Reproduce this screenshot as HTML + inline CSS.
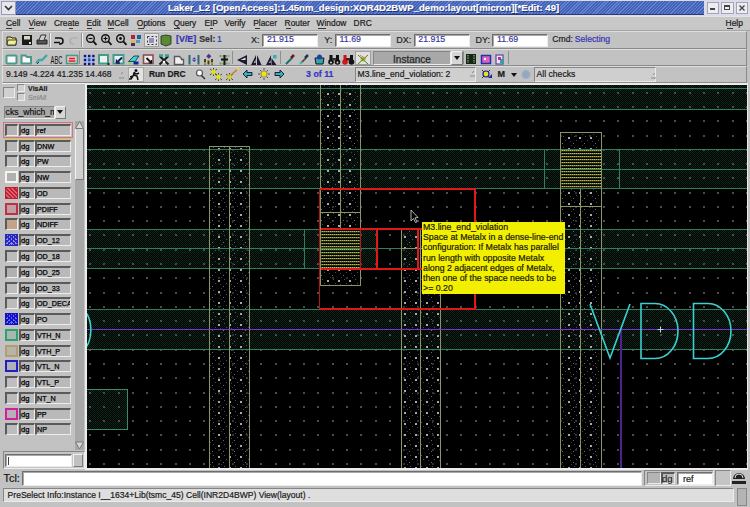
<!DOCTYPE html>
<html><head><meta charset="utf-8">
<style>
*{margin:0;padding:0;box-sizing:border-box}
html,body{width:750px;height:507px;overflow:hidden;background:#c2c2c2;font-family:"Liberation Sans",sans-serif;color:#1a1a1a}
.a{position:absolute}
.t{position:absolute;white-space:nowrap;font-size:9px;line-height:11px;-webkit-text-stroke:0.2px currentColor}
.sunk{border-top:1px solid #858585;border-left:1px solid #858585;border-bottom:1px solid #ececec;border-right:1px solid #ececec}
.raise{border-top:1px solid #f2f2f2;border-left:1px solid #f2f2f2;border-bottom:1px solid #7c7c7c;border-right:1px solid #7c7c7c}
.fld{position:absolute;background:#fff;border-top:1px solid #6e6e6e;border-left:1px solid #6e6e6e;border-bottom:1px solid #ececec;border-right:1px solid #ececec;box-shadow:inset 1px 1px 0 #a8a8a8}
.blue{color:#3c3cb4}
.ul{position:absolute;height:1px;background:#333}
.cell{position:absolute;background:#b9b9b9;border-top:2px solid #5a5a5a;border-left:2px solid #5a5a5a;border-bottom:1px solid #ececec;border-right:1px solid #ececec}
.lt{position:absolute;white-space:nowrap;font-size:9.5px;line-height:10px;color:#111}
</style></head><body>

<!-- title bar -->
<div class="a" style="left:0;top:0;width:750px;height:16px;background:#dcdce4"></div>
<div class="a" style="left:16px;top:1px;width:688px;height:14px;background:repeating-linear-gradient(135deg,#6482d0 0 1px,#4262b8 1px 2.3px);border-bottom:1px solid #2a3a7a"></div>
<div class="a" style="left:1px;top:1px;width:15px;height:14px;background:#e6e6ee;border:1px solid #9a9ab0"></div>
<svg class="a" style="left:4px;top:5px" width="9" height="6"><path d="M1,1 L4.5,4.5 L8,1" fill="none" stroke="#333" stroke-width="1.6"/></svg>
<div class="t" style="left:167.90px;top:3.11px;font-size:9.6px;line-height:10.72px;font-weight:bold;color:#fff;text-shadow:1px 1px 0 #24306a">Laker_L2 [OpenAccess]:1.45nm_design:XOR4D2BWP_demo:layout[micron][*Edit: 49]</div>
<div class="a" style="left:704px;top:0px;width:46px;height:16px;background:#dcdce8"></div>
<div class="a" style="left:707px;top:2px;width:12px;height:12px;background:#ececf2;border:1px solid #a4a4b8"></div>
<div class="a" style="left:710px;top:8px;width:5px;height:2px;background:#444"></div>
<div class="a" style="left:721px;top:2px;width:13px;height:12px;background:#ececf2;border:1px solid #a4a4b8"></div>
<div class="a" style="left:724px;top:5px;width:6px;height:5px;border:1px solid #444;border-top-width:2px"></div>
<div class="a" style="left:736px;top:2px;width:12px;height:12px;background:#ececf2;border:1px solid #a4a4b8"></div>
<svg class="a" style="left:739px;top:5px" width="6" height="6"><path d="M0.5,0.5 L5.5,5.5 M5.5,0.5 L0.5,5.5" stroke="#444" stroke-width="1.3"/></svg>

<!-- menu bar -->
<div class="a" style="left:0;top:16px;width:750px;height:15px;background:#c8c8c8;border-top:1px solid #e4e4e4;border-bottom:1px solid #a4a4a4"></div>
<div class="t" style="left:6.00px;top:18.50px;font-size:8.4px;line-height:9.38px;">Cell</div><div class="ul" style="left:6px;top:28px;width:6px"></div>
<div class="t" style="left:28.40px;top:18.50px;font-size:8.4px;line-height:9.38px;">View</div><div class="ul" style="left:29px;top:28px;width:5px"></div>
<div class="t" style="left:54.00px;top:18.50px;font-size:8.4px;line-height:9.38px;">Create</div><div class="ul" style="left:68.5px;top:28px;width:4.5px"></div>
<div class="t" style="left:86.50px;top:18.50px;font-size:8.4px;line-height:9.38px;">Edit</div><div class="ul" style="left:87px;top:28px;width:5px"></div>
<div class="t" style="left:107.30px;top:18.50px;font-size:8.4px;line-height:9.38px;">MCell</div><div class="ul" style="left:108px;top:28px;width:6px"></div>
<div class="t" style="left:136.70px;top:18.50px;font-size:8.4px;line-height:9.38px;">Options</div><div class="ul" style="left:138px;top:28px;width:6px"></div>
<div class="t" style="left:173.50px;top:18.50px;font-size:8.4px;line-height:9.38px;">Query</div><div class="ul" style="left:174px;top:28px;width:6px"></div>
<div class="t" style="left:204.40px;top:18.50px;font-size:8.4px;line-height:9.38px;">EIP</div><div class="ul" style="left:210px;top:28px;width:3px"></div>
<div class="t" style="left:224.60px;top:18.50px;font-size:8.4px;line-height:9.38px;">Verify</div>
<div class="t" style="left:253.20px;top:18.50px;font-size:8.4px;line-height:9.38px;">Placer</div><div class="ul" style="left:255px;top:28px;width:5px"></div>
<div class="t" style="left:284.60px;top:18.50px;font-size:8.4px;line-height:9.38px;">Router</div><div class="ul" style="left:286px;top:28px;width:5px"></div>
<div class="t" style="left:316.60px;top:18.50px;font-size:8.4px;line-height:9.38px;">Window</div><div class="ul" style="left:318px;top:28px;width:8px"></div>
<div class="t" style="left:353.60px;top:18.50px;font-size:8.4px;line-height:9.38px;">DRC</div>
<div class="t" style="left:725.60px;top:18.50px;font-size:8.4px;line-height:9.38px;">Help</div><div class="ul" style="left:727px;top:28px;width:6px"></div>

<!-- toolbar frames -->
<div class="a" style="left:2px;top:31px;width:745px;height:18px;border-top:1px solid #dedede;border-left:1px solid #dedede;border-bottom:1px solid #8a8a8a;border-right:1px solid #8a8a8a"></div>
<div class="a" style="left:2px;top:49px;width:745px;height:17px;border-top:1px solid #dedede;border-left:1px solid #dedede;border-bottom:1px solid #8a8a8a;border-right:1px solid #8a8a8a"></div>
<div class="a" style="left:2px;top:66px;width:745px;height:17px;border-top:1px solid #dedede;border-left:1px solid #dedede;border-bottom:1px solid #8a8a8a;border-right:1px solid #8a8a8a"></div>

<!-- toolbar 1 -->
<div class="a" style="left:144px;top:33px;width:15px;height:14px;background:#e2e2e2;border:1px solid #a0a0a0"></div>
<div class="t" style="left:176.10px;top:34.74px;font-size:8.8px;line-height:9.83px;color:#3434b0;font-weight:bold">[V/E]</div>
<div class="t" style="left:199.20px;top:34.74px;font-size:8.8px;line-height:9.83px;color:#333;font-weight:bold">Sel:</div><div class="t" style="left:216.90px;top:34.74px;font-size:8.8px;line-height:9.83px;color:#3434b0;">1</div>
<div class="t" style="left:250.90px;top:34.56px;font-size:9.0px;line-height:10.05px;color:#222;">X:</div>
<div class="fld" style="left:262px;top:34px;width:56px;height:13px"></div>
<div class="t" style="left:266.90px;top:34.74px;font-size:8.8px;line-height:9.83px;color:#3a3a9c;">21.915</div>
<div class="t" style="left:324.30px;top:34.56px;font-size:9.0px;line-height:10.05px;color:#222;">Y:</div>
<div class="fld" style="left:335px;top:34px;width:56px;height:13px"></div>
<div class="t" style="left:339.60px;top:34.74px;font-size:8.8px;line-height:9.83px;color:#3a3a9c;">11.69</div>
<div class="t" style="left:396.30px;top:34.56px;font-size:9.0px;line-height:10.05px;color:#222;">DX:</div>
<div class="fld" style="left:414px;top:34px;width:56px;height:13px"></div>
<div class="t" style="left:418.30px;top:34.74px;font-size:8.8px;line-height:9.83px;color:#3a3a9c;">21.915</div>
<div class="t" style="left:475.60px;top:34.56px;font-size:9.0px;line-height:10.05px;color:#222;">DY:</div>
<div class="fld" style="left:492px;top:34px;width:56px;height:13px"></div>
<div class="t" style="left:496.90px;top:34.74px;font-size:8.8px;line-height:9.83px;color:#3a3a9c;">11.69</div>
<div class="t" style="left:552.30px;top:34.92px;font-size:8.6px;line-height:9.61px;color:#222;">Cmd:</div><div class="t" style="left:574.80px;top:34.92px;font-size:8.6px;line-height:9.61px;color:#3434b0;">Selecting</div>

<!-- toolbar 2 -->
<div class="a" style="left:355px;top:51px;width:16px;height:14px;background:#e2e2e2;border:1px solid #a0a0a0"></div>
<div class="a sunk" style="left:373px;top:51px;width:78px;height:14px;background:#a8a8a8"></div>
<div class="t" style="left:393.10px;top:54.05px;font-size:10.0px;line-height:11.17px;color:#222;">Instance</div>
<div class="a raise" style="left:451px;top:51px;width:12px;height:14px;background:#d6d6d6"></div>
<svg class="a" style="left:454px;top:56px" width="7" height="5"><path d="M0,0 H6 L3,4 Z" fill="#111"/></svg>

<!-- toolbar 3 -->

<div class="t" style="left:6.00px;top:69.82px;font-size:8.6px;line-height:9.61px;">9.149 -4.224 41.235 14.468</div>
<div class="a" style="left:128px;top:67px;width:16px;height:15px;background:#e2e2e2;border:1px solid #a8a8a8"></div>
<div class="t" style="left:148.90px;top:70.00px;font-size:8.4px;line-height:9.38px;font-weight:bold;">Run DRC</div>
<div class="t" style="left:306.10px;top:69.64px;font-size:8.8px;line-height:9.83px;font-weight:bold;color:#3636c8;">3 of 11</div>
<div class="a sunk" style="left:355px;top:67px;width:121px;height:15px;background:#cfcfcf"></div>
<div class="t" style="left:357.60px;top:69.82px;font-size:8.6px;line-height:9.61px;">M3.line_end_violation: 2</div>
<div class="t" style="left:497.60px;top:69.45px;font-size:9.0px;line-height:10.05px;font-weight:bold;">M</div>
<svg class="a" style="left:511px;top:73px" width="7" height="5"><path d="M0,0 H6 L3,4 Z" fill="#111"/></svg>
<div class="a sunk" style="left:534px;top:67px;width:122px;height:15px;background:#cfcfcf"></div>
<div class="t" style="left:536.60px;top:69.82px;font-size:8.6px;line-height:9.61px;">All checks</div>

<svg class="a" style="left:0;top:0" width="750" height="90" viewBox="0 0 750 90">
<path d="M7,37 h4 l1,1 h4 v7 h-9 z" fill="#e8e070" stroke="#222" stroke-width="1"/>
<path d="M8,40 h9 l-1.5,5 h-8.5 z" fill="#f0f090" stroke="#222" stroke-width="0.8"/>
<rect x="22" y="35" width="10" height="10" fill="#1a1a1a"/><rect x="24" y="36" width="6" height="3.5" fill="#d8d8c0"/><rect x="29" y="42" width="2" height="2" fill="#ddd"/>
<path d="M37,40 h10 v4 h-10 z" fill="#555" stroke="#222"/><path d="M39,40 l2,-5 h5 l-2,5" fill="#ccc" stroke="#333"/>
<line x1="49.5" y1="33" x2="49.5" y2="47" stroke="#909090"/><line x1="50.5" y1="33" x2="50.5" y2="47" stroke="#f0f0f0"/>
<line x1="81.5" y1="33" x2="81.5" y2="47" stroke="#909090"/><line x1="82.5" y1="33" x2="82.5" y2="47" stroke="#f0f0f0"/>
<path d="M55,38 h5 a3,3 0 0 1 0,6 h-1" fill="none" stroke="#111" stroke-width="1.5"/><path d="M54,42.5 h6" stroke="#111" stroke-width="1.5"/>
<path d="M78,38 h-5 a3,3 0 0 0 0,6 h1" fill="none" stroke="#a8a8a8" stroke-width="1.2"/>
<circle cx="90.5" cy="38.5" r="3.8" fill="none" stroke="#111" stroke-width="1.4"/><line x1="93.3" y1="41.3" x2="96.5" y2="44.8" stroke="#111" stroke-width="1.8"/>
<line x1="88.5" y1="38.5" x2="92.5" y2="38.5" stroke="#111" stroke-width="1.2"/>
<circle cx="105.5" cy="38.5" r="3.8" fill="none" stroke="#111" stroke-width="1.4"/><line x1="108.3" y1="41.3" x2="111.5" y2="44.8" stroke="#111" stroke-width="1.8"/>
<path d="M103.5,38.5 h4 M105.5,36.5 v4" stroke="#111" stroke-width="1.2"/>
<circle cx="120.5" cy="38.5" r="3.8" fill="none" stroke="#111" stroke-width="1.4"/><line x1="123.3" y1="41.3" x2="126.5" y2="44.8" stroke="#111" stroke-width="1.8"/>
<circle cx="120.5" cy="38.5" r="1.4" fill="#111"/>
<rect x="131" y="35" width="4" height="4" fill="#b02040"/><rect x="137" y="35" width="4" height="4" fill="#2060a0"/><rect x="131" y="40" width="4" height="3" fill="#d0c040"/><rect x="131" y="43" width="4" height="3" fill="#602060"/><rect x="136" y="40" width="4" height="3" fill="#40a0c0"/>
<rect x="147.5" y="36.5" width="9" height="8" fill="none" stroke="#333" stroke-dasharray="2,2"/><rect x="149" y="38" width="5" height="5" fill="#9090b8"/>
<path d="M161,36 l5,-1 l5,1 v8 l-5,2 l-5,-2 z" fill="#5a8a30" stroke="#223" stroke-width="0.8"/>
<rect x="6.5" y="55.5" width="10" height="8" rx="1" fill="#f8f8f8" stroke="#4a9a8c" stroke-width="2"/>
<path d="M21.5,55.5 h4 l1.5,1.5 h4 v6.5 h-9.5 z" fill="#f8f8f8" stroke="#4a9a8c" stroke-width="2"/>
<path d="M36,63 l3,-3 h3 l5,-5" fill="none" stroke="#40a8a8" stroke-width="2.4"/><path d="M37,64 l2,-2" stroke="#333" stroke-width="1"/>
<text x="50.5" y="63.8" font-family="Liberation Sans" font-size="10.5" fill="#111" textLength="12" lengthAdjust="spacingAndGlyphs">ABC</text>
<rect x="66.5" y="55.5" width="11" height="8" fill="#f4c8c8" stroke="#4a9a8c" stroke-width="1.6"/><path d="M68.5,61 h7 M69,58.5 h6" stroke="#e02020" stroke-width="1.6"/>
<line x1="79.5" y1="51" x2="79.5" y2="64" stroke="#909090"/>
<rect x="84" y="55" width="10" height="9" fill="#a8b8f0"/>
<rect x="83.8" y="54.8" width="2.4" height="2.4" fill="#101870"/>
<rect x="83.8" y="58.8" width="2.4" height="2.4" fill="#101870"/>
<rect x="83.8" y="62.8" width="2.4" height="2.4" fill="#101870"/>
<rect x="88.0" y="54.8" width="2.4" height="2.4" fill="#101870"/>
<rect x="88.0" y="58.8" width="2.4" height="2.4" fill="#101870"/>
<rect x="88.0" y="62.8" width="2.4" height="2.4" fill="#101870"/>
<rect x="92.2" y="54.8" width="2.4" height="2.4" fill="#101870"/>
<rect x="92.2" y="58.8" width="2.4" height="2.4" fill="#101870"/>
<rect x="92.2" y="62.8" width="2.4" height="2.4" fill="#101870"/>
<circle cx="89" cy="59.5" r="1.2" fill="#208080"/>
<rect x="99" y="55" width="9" height="8.5" fill="#e8f4f0" stroke="#4a9a8c" stroke-width="2"/><rect x="107.5" y="63" width="2" height="2" fill="#222"/>
<rect x="113.5" y="55" width="10" height="8.5" fill="#e8f4f0" stroke="#4a9a8c" stroke-width="2"/><path d="M117,62.5 l5,-5" stroke="#101860" stroke-width="2"/><path d="M116.5,59.5 v3.5 h3.5" fill="none" stroke="#101860" stroke-width="1.5"/>
<path d="M128.5,61.5 l5.5,-5.5 h5 l-4,5.5 z" fill="#40d0d0" stroke="#204a60" stroke-width="1"/><rect x="133.5" y="61.5" width="5" height="3" fill="#1020a0"/><rect x="128.5" y="62.5" width="4" height="1.8" fill="#90d070"/>
<rect x="143.5" y="55" width="9.5" height="8.5" fill="#f0ecec" stroke="#8a5050" stroke-width="1.6"/><path d="M146.5,58 l5,5" stroke="#112" stroke-width="1.8"/><path d="M151.5,60 v3 h-3" fill="none" stroke="#112" stroke-width="1.2"/>
<path d="M159.5,56 l9,8.5 M168.5,56 l-9,8.5" stroke="#1a1a1a" stroke-width="2"/><path d="M159,55.5 h4 M165,55.5 h4" stroke="#30a890" stroke-width="2.6"/><circle cx="164" cy="62" r="1.3" fill="#fff"/>
<path d="M174.5,56.5 h5 l2,2 v1 h2 v5 h-9 z" fill="#f0f0f0" stroke="#5a5a5a" stroke-width="1.4"/>
<path d="M189.5,55 v9.5 M198.5,55 v9.5" stroke="#306a70" stroke-width="2"/><rect x="192.5" y="58" width="3.4" height="3.4" fill="#4030b0" transform="rotate(45 194.2 59.7)"/><path d="M191,59.7 h6" stroke="#b0c0e0" stroke-width="0.8"/>
<path d="M205,64.5 v-5.5 M208.5,64.5 v-4 M212,64.5 v-5.5" stroke="#5a3a10" stroke-width="2"/><path d="M205,62 v2 M212,62 v2" stroke="#80a040" stroke-width="2"/><rect x="207" y="54.5" width="3.6" height="3.6" fill="#503090" transform="rotate(45 208.8 56.3)"/>
<path d="M219.5,56 h10 M219.5,63.5 h10" stroke="#70a060" stroke-width="2" stroke-dasharray="2,1"/><path d="M224.5,55 v10" stroke="#1a1a1a" stroke-width="2"/><path d="M221,59.5 h7" stroke="#1a1a1a" stroke-width="2.2"/>
<line x1="232.5" y1="51" x2="232.5" y2="64" stroke="#909090"/>
<path d="M237,60 l10,-5 v10 z" fill="#201830"/><path d="M240.5,60 l5,-2.5 v2.5 z" fill="#e0e0e0"/>
<path d="M251,65 l5,-10 v10 z M257,55 l4.5,10 h-4.5 z" fill="#201830"/><path d="M254,63 l1.5,-4 v4 z" fill="#ddd"/>
<path d="M266,65 l5,-10 v10 z M271.5,58 l5,7 h-5 z" fill="#201830"/><rect x="273" y="55" width="3.5" height="3.5" fill="#30b0b0"/><path d="M269,63 l1.5,-3 v3 z" fill="#ddd"/>
<line x1="280.5" y1="51" x2="280.5" y2="64" stroke="#909090"/>
<path d="M286,64 l6,-6" stroke="#20706a" stroke-width="2"/><path d="M291,58 l3,-3" stroke="#6a1a1a" stroke-width="2.5"/>
<path d="M300,64 l6,-6" stroke="#30c0b0" stroke-width="2.2"/><path d="M302,62 l4,-4" stroke="#a02020" stroke-width="1.2"/><path d="M305,58 l3,-3" stroke="#1a3a4a" stroke-width="2.5"/>
<path d="M315,58 h9 l-1,6 h-7 z" fill="#30a8a0" stroke="#113" stroke-width="1"/><circle cx="319.5" cy="57" r="2.5" fill="#2040a0"/>
<circle cx="331" cy="62" r="2.8" fill="#111"/><circle cx="337.5" cy="62" r="2.8" fill="#111"/><rect x="329.5" y="55" width="3" height="6" fill="#111"/><rect x="336" y="55" width="3" height="6" fill="#111"/><rect x="332" y="58" width="4" height="2.5" fill="#333"/><circle cx="331" cy="62.5" r="1" fill="#ddd"/><circle cx="337.5" cy="62.5" r="1" fill="#ddd"/>
<circle cx="345" cy="62" r="2.8" fill="#d01818"/><circle cx="351.5" cy="62" r="2.8" fill="#111"/><rect x="343.5" y="55" width="3" height="6" fill="#c01818"/><rect x="350" y="55" width="3" height="6" fill="#111"/><rect x="346" y="58" width="4" height="2.5" fill="#611"/>
<circle cx="363" cy="59" r="2.5" fill="#c0c020"/><path d="M358,55 l10,9 M368,55 l-10,9" stroke="#408a30" stroke-width="1"/><path d="M360,55 l6,4" stroke="#e08080" stroke-width="1"/>
<line x1="463.5" y1="51" x2="463.5" y2="64" stroke="#909090"/>
<rect x="466" y="54" width="10" height="10" fill="#202020"/><path d="M468,55 v8 M474,55 v8" stroke="#40c040" stroke-width="1.5" stroke-dasharray="1.5,1"/>
<rect x="481.5" y="55.5" width="9" height="8" fill="#e060c0" stroke="#2030b0" stroke-width="1.5"/><rect x="484" y="58" width="2" height="2" fill="#fff"/>
<rect x="496" y="55" width="7" height="9" fill="#e8e8f0" stroke="#6040b0" stroke-width="1.2"/><rect x="500" y="59" width="4" height="4" fill="#30a0a0"/><rect x="498" y="57" width="3" height="3" fill="#c03080"/>
<line x1="508.5" y1="51" x2="508.5" y2="64" stroke="#909090"/>
<path d="M119,78 h5 M121,74 l2,-2" stroke="#888" stroke-width="1"/>
<circle cx="136" cy="70.5" r="1.5" fill="#111"/><path d="M135,72 l-2,4 l-3,1 M134,75 l3,1 l1,4 M133,73 l4,1 l2,-1 M133,76 l-2,3 l-2,0" fill="none" stroke="#111" stroke-width="1.5"/>
<circle cx="199.5" cy="73" r="3" fill="#fff" stroke="#555" stroke-width="1.2"/><line x1="201.5" y1="75.5" x2="205" y2="79" stroke="#333" stroke-width="1.5"/>
<path d="M210,69 l7,6 M217,69 l-7,6 M213.5,68 v8 M215,74 l7,6 M222,74 l-7,6 M218.5,73 v8" stroke="#3a3a20" stroke-width="0.9"/><circle cx="213.5" cy="72" r="2.4" fill="#e0e020"/><circle cx="218.5" cy="77" r="2.4" fill="#e0e020"/>
<path d="M226,74 l7,6 M233,74 l-7,6 M229.5,73 v8" stroke="#3a3a20" stroke-width="0.9"/><circle cx="229.5" cy="77" r="2.4" fill="#d0d020"/><path d="M231,75 l7,-6" stroke="#d07050" stroke-width="1.6"/><circle cx="238" cy="69" r="1.4" fill="#f0d040"/>
<path d="M243,74 l4,-4 v2.5 h5 v3 h-5 v2.5 z" fill="#30b0c0" stroke="#112" stroke-width="0.9"/>
<circle cx="264" cy="74" r="3.2" fill="#f0e020" stroke="#555" stroke-width="0.6"/><path d="M264,68 v2 M264,78 v2 M258,74 h2 M268,74 h2 M260,70 l1.3,1.3 M268,70 l-1.3,1.3 M260,78 l1.3,-1.3 M268,78 l-1.3,-1.3" stroke="#444" stroke-width="0.9"/>
<path d="M284,74 l-4,-4 v2.5 h-5 v3 h5 v2.5 z" fill="#30b0c0" stroke="#112" stroke-width="0.9"/>
<path d="M470,76 h5 M472,73 l2,-2" stroke="#888" stroke-width="1"/>
<circle cx="486" cy="74" r="3" fill="#e8e020" stroke="#2020a0" stroke-width="1.2"/><path d="M482,70 l2,2 M490,70 l-2,2 M490,78 l-2,-2 M482,78 l2,-2" stroke="#333" stroke-width="1"/><path d="M488,78 l4,-4 v4 z" fill="#2020a0"/>
<circle cx="526" cy="74.5" r="4" fill="#90a8c0" stroke="#a0b0c8" stroke-width="1.5" stroke-dasharray="1.5,1"/>
<path d="M651,78 h5 M653,75 l2,-2" stroke="#888" stroke-width="1"/>
</svg>
<svg class="a" style="left:731px;top:470px" width="16" height="17"><path d="M2,9 a6,6 0 0 1 12,0 z" fill="#222"/><path d="M4,8 a4,4 0 0 1 8,0" fill="none" stroke="#ddd" stroke-width="1"/><rect x="1" y="11" width="14" height="3" fill="#222"/></svg>
<svg class="a" style="left:736px;top:489px" width="11" height="17"><path d="M5.5,2 l3,4 h-6 z M5.5,15 l3,-4 h-6 z" fill="#eee" stroke="#666" stroke-width="0.7"/></svg>

<!-- canvas frame -->
<div class="a" style="left:85px;top:83px;width:663px;height:387px;background:#ececec"></div>
<svg class="a" style="left:0;top:0" width="750" height="507" viewBox="0 0 750 507" shape-rendering="crispEdges">
<defs>
<clipPath id="cc"><rect x="87" y="85" width="660" height="383"/></clipPath>
<pattern id="stip" width="2" height="2" patternUnits="userSpaceOnUse"><rect width="2" height="2" fill="#000"/><rect width="1" height="1" fill="#0c261a"/><rect x="1" y="1" width="1" height="1" fill="#0c261a"/></pattern>
<pattern id="sdots" width="4" height="4" patternUnits="userSpaceOnUse"><rect width="4" height="4" fill="#000"/><rect x="0" y="0" width="1" height="1" fill="#505060"/><rect x="2" y="2" width="1" height="1" fill="#404048"/></pattern>
<pattern id="hatch" width="2" height="3" patternUnits="userSpaceOnUse"><rect width="2" height="3" fill="#000"/><rect x="0" y="0" width="1" height="1" fill="#b8c04c"/><rect x="1" y="0" width="1" height="1" fill="#6c7230"/><rect x="0" y="1" width="2" height="1" fill="#23260c"/></pattern>
</defs>
<g clip-path="url(#cc)">
<rect x="87" y="85" width="660" height="383" fill="#000" />
<rect x="87" y="69" width="660" height="41" fill="url(#stip)" />
<rect x="87" y="149" width="660" height="40" fill="url(#stip)" />
<rect x="87" y="229" width="660" height="40" fill="url(#stip)" />
<rect x="87" y="309" width="660" height="41" fill="url(#stip)" />
<rect x="378" y="229" width="23" height="40" fill="#000" />
<rect x="80" y="389" width="47" height="40" fill="url(#stip)" stroke="#3a8a70" stroke-width="1"/>
<rect x="89" y="92" width="2" height="2" fill="#4c4c4c"/>
<rect x="89" y="106" width="2" height="2" fill="#4c4c4c"/>
<rect x="89" y="120" width="2" height="2" fill="#4c4c4c"/>
<rect x="89" y="135" width="2" height="2" fill="#4c4c4c"/>
<rect x="89" y="149" width="2" height="2" fill="#4c4c4c"/>
<rect x="89" y="163" width="2" height="2" fill="#4c4c4c"/>
<rect x="89" y="177" width="2" height="2" fill="#4c4c4c"/>
<rect x="89" y="192" width="2" height="2" fill="#4c4c4c"/>
<rect x="89" y="206" width="2" height="2" fill="#4c4c4c"/>
<rect x="89" y="220" width="2" height="2" fill="#4c4c4c"/>
<rect x="89" y="234" width="2" height="2" fill="#4c4c4c"/>
<rect x="89" y="249" width="2" height="2" fill="#4c4c4c"/>
<rect x="89" y="263" width="2" height="2" fill="#4c4c4c"/>
<rect x="89" y="277" width="2" height="2" fill="#4c4c4c"/>
<rect x="89" y="292" width="2" height="2" fill="#4c4c4c"/>
<rect x="89" y="306" width="2" height="2" fill="#4c4c4c"/>
<rect x="89" y="320" width="2" height="2" fill="#4c4c4c"/>
<rect x="89" y="334" width="2" height="2" fill="#4c4c4c"/>
<rect x="89" y="349" width="2" height="2" fill="#4c4c4c"/>
<rect x="89" y="363" width="2" height="2" fill="#4c4c4c"/>
<rect x="89" y="377" width="2" height="2" fill="#4c4c4c"/>
<rect x="89" y="392" width="2" height="2" fill="#4c4c4c"/>
<rect x="89" y="406" width="2" height="2" fill="#4c4c4c"/>
<rect x="89" y="420" width="2" height="2" fill="#4c4c4c"/>
<rect x="89" y="434" width="2" height="2" fill="#4c4c4c"/>
<rect x="89" y="449" width="2" height="2" fill="#4c4c4c"/>
<rect x="89" y="463" width="2" height="2" fill="#4c4c4c"/>
<rect x="103" y="92" width="2" height="2" fill="#4c4c4c"/>
<rect x="103" y="106" width="2" height="2" fill="#4c4c4c"/>
<rect x="103" y="120" width="2" height="2" fill="#4c4c4c"/>
<rect x="103" y="135" width="2" height="2" fill="#4c4c4c"/>
<rect x="103" y="149" width="2" height="2" fill="#4c4c4c"/>
<rect x="103" y="163" width="2" height="2" fill="#4c4c4c"/>
<rect x="103" y="177" width="2" height="2" fill="#4c4c4c"/>
<rect x="103" y="192" width="2" height="2" fill="#4c4c4c"/>
<rect x="103" y="206" width="2" height="2" fill="#4c4c4c"/>
<rect x="103" y="220" width="2" height="2" fill="#4c4c4c"/>
<rect x="103" y="234" width="2" height="2" fill="#4c4c4c"/>
<rect x="103" y="249" width="2" height="2" fill="#4c4c4c"/>
<rect x="103" y="263" width="2" height="2" fill="#4c4c4c"/>
<rect x="103" y="277" width="2" height="2" fill="#4c4c4c"/>
<rect x="103" y="292" width="2" height="2" fill="#4c4c4c"/>
<rect x="103" y="306" width="2" height="2" fill="#4c4c4c"/>
<rect x="103" y="320" width="2" height="2" fill="#4c4c4c"/>
<rect x="103" y="334" width="2" height="2" fill="#4c4c4c"/>
<rect x="103" y="349" width="2" height="2" fill="#4c4c4c"/>
<rect x="103" y="363" width="2" height="2" fill="#4c4c4c"/>
<rect x="103" y="377" width="2" height="2" fill="#4c4c4c"/>
<rect x="103" y="392" width="2" height="2" fill="#4c4c4c"/>
<rect x="103" y="406" width="2" height="2" fill="#4c4c4c"/>
<rect x="103" y="420" width="2" height="2" fill="#4c4c4c"/>
<rect x="103" y="434" width="2" height="2" fill="#4c4c4c"/>
<rect x="103" y="449" width="2" height="2" fill="#4c4c4c"/>
<rect x="103" y="463" width="2" height="2" fill="#4c4c4c"/>
<rect x="118" y="92" width="2" height="2" fill="#4c4c4c"/>
<rect x="118" y="106" width="2" height="2" fill="#4c4c4c"/>
<rect x="118" y="120" width="2" height="2" fill="#4c4c4c"/>
<rect x="118" y="135" width="2" height="2" fill="#4c4c4c"/>
<rect x="118" y="149" width="2" height="2" fill="#4c4c4c"/>
<rect x="118" y="163" width="2" height="2" fill="#4c4c4c"/>
<rect x="118" y="177" width="2" height="2" fill="#4c4c4c"/>
<rect x="118" y="192" width="2" height="2" fill="#4c4c4c"/>
<rect x="118" y="206" width="2" height="2" fill="#4c4c4c"/>
<rect x="118" y="220" width="2" height="2" fill="#4c4c4c"/>
<rect x="118" y="234" width="2" height="2" fill="#4c4c4c"/>
<rect x="118" y="249" width="2" height="2" fill="#4c4c4c"/>
<rect x="118" y="263" width="2" height="2" fill="#4c4c4c"/>
<rect x="118" y="277" width="2" height="2" fill="#4c4c4c"/>
<rect x="118" y="292" width="2" height="2" fill="#4c4c4c"/>
<rect x="118" y="306" width="2" height="2" fill="#4c4c4c"/>
<rect x="118" y="320" width="2" height="2" fill="#4c4c4c"/>
<rect x="118" y="334" width="2" height="2" fill="#4c4c4c"/>
<rect x="118" y="349" width="2" height="2" fill="#4c4c4c"/>
<rect x="118" y="363" width="2" height="2" fill="#4c4c4c"/>
<rect x="118" y="377" width="2" height="2" fill="#4c4c4c"/>
<rect x="118" y="392" width="2" height="2" fill="#4c4c4c"/>
<rect x="118" y="406" width="2" height="2" fill="#4c4c4c"/>
<rect x="118" y="420" width="2" height="2" fill="#4c4c4c"/>
<rect x="118" y="434" width="2" height="2" fill="#4c4c4c"/>
<rect x="118" y="449" width="2" height="2" fill="#4c4c4c"/>
<rect x="118" y="463" width="2" height="2" fill="#4c4c4c"/>
<rect x="132" y="92" width="2" height="2" fill="#4c4c4c"/>
<rect x="132" y="106" width="2" height="2" fill="#4c4c4c"/>
<rect x="132" y="120" width="2" height="2" fill="#4c4c4c"/>
<rect x="132" y="135" width="2" height="2" fill="#4c4c4c"/>
<rect x="132" y="149" width="2" height="2" fill="#4c4c4c"/>
<rect x="132" y="163" width="2" height="2" fill="#4c4c4c"/>
<rect x="132" y="177" width="2" height="2" fill="#4c4c4c"/>
<rect x="132" y="192" width="2" height="2" fill="#4c4c4c"/>
<rect x="132" y="206" width="2" height="2" fill="#4c4c4c"/>
<rect x="132" y="220" width="2" height="2" fill="#4c4c4c"/>
<rect x="132" y="234" width="2" height="2" fill="#4c4c4c"/>
<rect x="132" y="249" width="2" height="2" fill="#4c4c4c"/>
<rect x="132" y="263" width="2" height="2" fill="#4c4c4c"/>
<rect x="132" y="277" width="2" height="2" fill="#4c4c4c"/>
<rect x="132" y="292" width="2" height="2" fill="#4c4c4c"/>
<rect x="132" y="306" width="2" height="2" fill="#4c4c4c"/>
<rect x="132" y="320" width="2" height="2" fill="#4c4c4c"/>
<rect x="132" y="334" width="2" height="2" fill="#4c4c4c"/>
<rect x="132" y="349" width="2" height="2" fill="#4c4c4c"/>
<rect x="132" y="363" width="2" height="2" fill="#4c4c4c"/>
<rect x="132" y="377" width="2" height="2" fill="#4c4c4c"/>
<rect x="132" y="392" width="2" height="2" fill="#4c4c4c"/>
<rect x="132" y="406" width="2" height="2" fill="#4c4c4c"/>
<rect x="132" y="420" width="2" height="2" fill="#4c4c4c"/>
<rect x="132" y="434" width="2" height="2" fill="#4c4c4c"/>
<rect x="132" y="449" width="2" height="2" fill="#4c4c4c"/>
<rect x="132" y="463" width="2" height="2" fill="#4c4c4c"/>
<rect x="146" y="92" width="2" height="2" fill="#4c4c4c"/>
<rect x="146" y="106" width="2" height="2" fill="#4c4c4c"/>
<rect x="146" y="120" width="2" height="2" fill="#4c4c4c"/>
<rect x="146" y="135" width="2" height="2" fill="#4c4c4c"/>
<rect x="146" y="149" width="2" height="2" fill="#4c4c4c"/>
<rect x="146" y="163" width="2" height="2" fill="#4c4c4c"/>
<rect x="146" y="177" width="2" height="2" fill="#4c4c4c"/>
<rect x="146" y="192" width="2" height="2" fill="#4c4c4c"/>
<rect x="146" y="206" width="2" height="2" fill="#4c4c4c"/>
<rect x="146" y="220" width="2" height="2" fill="#4c4c4c"/>
<rect x="146" y="234" width="2" height="2" fill="#4c4c4c"/>
<rect x="146" y="249" width="2" height="2" fill="#4c4c4c"/>
<rect x="146" y="263" width="2" height="2" fill="#4c4c4c"/>
<rect x="146" y="277" width="2" height="2" fill="#4c4c4c"/>
<rect x="146" y="292" width="2" height="2" fill="#4c4c4c"/>
<rect x="146" y="306" width="2" height="2" fill="#4c4c4c"/>
<rect x="146" y="320" width="2" height="2" fill="#4c4c4c"/>
<rect x="146" y="334" width="2" height="2" fill="#4c4c4c"/>
<rect x="146" y="349" width="2" height="2" fill="#4c4c4c"/>
<rect x="146" y="363" width="2" height="2" fill="#4c4c4c"/>
<rect x="146" y="377" width="2" height="2" fill="#4c4c4c"/>
<rect x="146" y="392" width="2" height="2" fill="#4c4c4c"/>
<rect x="146" y="406" width="2" height="2" fill="#4c4c4c"/>
<rect x="146" y="420" width="2" height="2" fill="#4c4c4c"/>
<rect x="146" y="434" width="2" height="2" fill="#4c4c4c"/>
<rect x="146" y="449" width="2" height="2" fill="#4c4c4c"/>
<rect x="146" y="463" width="2" height="2" fill="#4c4c4c"/>
<rect x="160" y="92" width="2" height="2" fill="#4c4c4c"/>
<rect x="160" y="106" width="2" height="2" fill="#4c4c4c"/>
<rect x="160" y="120" width="2" height="2" fill="#4c4c4c"/>
<rect x="160" y="135" width="2" height="2" fill="#4c4c4c"/>
<rect x="160" y="149" width="2" height="2" fill="#4c4c4c"/>
<rect x="160" y="163" width="2" height="2" fill="#4c4c4c"/>
<rect x="160" y="177" width="2" height="2" fill="#4c4c4c"/>
<rect x="160" y="192" width="2" height="2" fill="#4c4c4c"/>
<rect x="160" y="206" width="2" height="2" fill="#4c4c4c"/>
<rect x="160" y="220" width="2" height="2" fill="#4c4c4c"/>
<rect x="160" y="234" width="2" height="2" fill="#4c4c4c"/>
<rect x="160" y="249" width="2" height="2" fill="#4c4c4c"/>
<rect x="160" y="263" width="2" height="2" fill="#4c4c4c"/>
<rect x="160" y="277" width="2" height="2" fill="#4c4c4c"/>
<rect x="160" y="292" width="2" height="2" fill="#4c4c4c"/>
<rect x="160" y="306" width="2" height="2" fill="#4c4c4c"/>
<rect x="160" y="320" width="2" height="2" fill="#4c4c4c"/>
<rect x="160" y="334" width="2" height="2" fill="#4c4c4c"/>
<rect x="160" y="349" width="2" height="2" fill="#4c4c4c"/>
<rect x="160" y="363" width="2" height="2" fill="#4c4c4c"/>
<rect x="160" y="377" width="2" height="2" fill="#4c4c4c"/>
<rect x="160" y="392" width="2" height="2" fill="#4c4c4c"/>
<rect x="160" y="406" width="2" height="2" fill="#4c4c4c"/>
<rect x="160" y="420" width="2" height="2" fill="#4c4c4c"/>
<rect x="160" y="434" width="2" height="2" fill="#4c4c4c"/>
<rect x="160" y="449" width="2" height="2" fill="#4c4c4c"/>
<rect x="160" y="463" width="2" height="2" fill="#4c4c4c"/>
<rect x="175" y="92" width="2" height="2" fill="#4c4c4c"/>
<rect x="175" y="106" width="2" height="2" fill="#4c4c4c"/>
<rect x="175" y="120" width="2" height="2" fill="#4c4c4c"/>
<rect x="175" y="135" width="2" height="2" fill="#4c4c4c"/>
<rect x="175" y="149" width="2" height="2" fill="#4c4c4c"/>
<rect x="175" y="163" width="2" height="2" fill="#4c4c4c"/>
<rect x="175" y="177" width="2" height="2" fill="#4c4c4c"/>
<rect x="175" y="192" width="2" height="2" fill="#4c4c4c"/>
<rect x="175" y="206" width="2" height="2" fill="#4c4c4c"/>
<rect x="175" y="220" width="2" height="2" fill="#4c4c4c"/>
<rect x="175" y="234" width="2" height="2" fill="#4c4c4c"/>
<rect x="175" y="249" width="2" height="2" fill="#4c4c4c"/>
<rect x="175" y="263" width="2" height="2" fill="#4c4c4c"/>
<rect x="175" y="277" width="2" height="2" fill="#4c4c4c"/>
<rect x="175" y="292" width="2" height="2" fill="#4c4c4c"/>
<rect x="175" y="306" width="2" height="2" fill="#4c4c4c"/>
<rect x="175" y="320" width="2" height="2" fill="#4c4c4c"/>
<rect x="175" y="334" width="2" height="2" fill="#4c4c4c"/>
<rect x="175" y="349" width="2" height="2" fill="#4c4c4c"/>
<rect x="175" y="363" width="2" height="2" fill="#4c4c4c"/>
<rect x="175" y="377" width="2" height="2" fill="#4c4c4c"/>
<rect x="175" y="392" width="2" height="2" fill="#4c4c4c"/>
<rect x="175" y="406" width="2" height="2" fill="#4c4c4c"/>
<rect x="175" y="420" width="2" height="2" fill="#4c4c4c"/>
<rect x="175" y="434" width="2" height="2" fill="#4c4c4c"/>
<rect x="175" y="449" width="2" height="2" fill="#4c4c4c"/>
<rect x="175" y="463" width="2" height="2" fill="#4c4c4c"/>
<rect x="189" y="92" width="2" height="2" fill="#4c4c4c"/>
<rect x="189" y="106" width="2" height="2" fill="#4c4c4c"/>
<rect x="189" y="120" width="2" height="2" fill="#4c4c4c"/>
<rect x="189" y="135" width="2" height="2" fill="#4c4c4c"/>
<rect x="189" y="149" width="2" height="2" fill="#4c4c4c"/>
<rect x="189" y="163" width="2" height="2" fill="#4c4c4c"/>
<rect x="189" y="177" width="2" height="2" fill="#4c4c4c"/>
<rect x="189" y="192" width="2" height="2" fill="#4c4c4c"/>
<rect x="189" y="206" width="2" height="2" fill="#4c4c4c"/>
<rect x="189" y="220" width="2" height="2" fill="#4c4c4c"/>
<rect x="189" y="234" width="2" height="2" fill="#4c4c4c"/>
<rect x="189" y="249" width="2" height="2" fill="#4c4c4c"/>
<rect x="189" y="263" width="2" height="2" fill="#4c4c4c"/>
<rect x="189" y="277" width="2" height="2" fill="#4c4c4c"/>
<rect x="189" y="292" width="2" height="2" fill="#4c4c4c"/>
<rect x="189" y="306" width="2" height="2" fill="#4c4c4c"/>
<rect x="189" y="320" width="2" height="2" fill="#4c4c4c"/>
<rect x="189" y="334" width="2" height="2" fill="#4c4c4c"/>
<rect x="189" y="349" width="2" height="2" fill="#4c4c4c"/>
<rect x="189" y="363" width="2" height="2" fill="#4c4c4c"/>
<rect x="189" y="377" width="2" height="2" fill="#4c4c4c"/>
<rect x="189" y="392" width="2" height="2" fill="#4c4c4c"/>
<rect x="189" y="406" width="2" height="2" fill="#4c4c4c"/>
<rect x="189" y="420" width="2" height="2" fill="#4c4c4c"/>
<rect x="189" y="434" width="2" height="2" fill="#4c4c4c"/>
<rect x="189" y="449" width="2" height="2" fill="#4c4c4c"/>
<rect x="189" y="463" width="2" height="2" fill="#4c4c4c"/>
<rect x="203" y="92" width="2" height="2" fill="#4c4c4c"/>
<rect x="203" y="106" width="2" height="2" fill="#4c4c4c"/>
<rect x="203" y="120" width="2" height="2" fill="#4c4c4c"/>
<rect x="203" y="135" width="2" height="2" fill="#4c4c4c"/>
<rect x="203" y="149" width="2" height="2" fill="#4c4c4c"/>
<rect x="203" y="163" width="2" height="2" fill="#4c4c4c"/>
<rect x="203" y="177" width="2" height="2" fill="#4c4c4c"/>
<rect x="203" y="192" width="2" height="2" fill="#4c4c4c"/>
<rect x="203" y="206" width="2" height="2" fill="#4c4c4c"/>
<rect x="203" y="220" width="2" height="2" fill="#4c4c4c"/>
<rect x="203" y="234" width="2" height="2" fill="#4c4c4c"/>
<rect x="203" y="249" width="2" height="2" fill="#4c4c4c"/>
<rect x="203" y="263" width="2" height="2" fill="#4c4c4c"/>
<rect x="203" y="277" width="2" height="2" fill="#4c4c4c"/>
<rect x="203" y="292" width="2" height="2" fill="#4c4c4c"/>
<rect x="203" y="306" width="2" height="2" fill="#4c4c4c"/>
<rect x="203" y="320" width="2" height="2" fill="#4c4c4c"/>
<rect x="203" y="334" width="2" height="2" fill="#4c4c4c"/>
<rect x="203" y="349" width="2" height="2" fill="#4c4c4c"/>
<rect x="203" y="363" width="2" height="2" fill="#4c4c4c"/>
<rect x="203" y="377" width="2" height="2" fill="#4c4c4c"/>
<rect x="203" y="392" width="2" height="2" fill="#4c4c4c"/>
<rect x="203" y="406" width="2" height="2" fill="#4c4c4c"/>
<rect x="203" y="420" width="2" height="2" fill="#4c4c4c"/>
<rect x="203" y="434" width="2" height="2" fill="#4c4c4c"/>
<rect x="203" y="449" width="2" height="2" fill="#4c4c4c"/>
<rect x="203" y="463" width="2" height="2" fill="#4c4c4c"/>
<rect x="218" y="92" width="2" height="2" fill="#4c4c4c"/>
<rect x="218" y="106" width="2" height="2" fill="#4c4c4c"/>
<rect x="218" y="120" width="2" height="2" fill="#4c4c4c"/>
<rect x="218" y="135" width="2" height="2" fill="#4c4c4c"/>
<rect x="218" y="149" width="2" height="2" fill="#4c4c4c"/>
<rect x="218" y="163" width="2" height="2" fill="#4c4c4c"/>
<rect x="218" y="177" width="2" height="2" fill="#4c4c4c"/>
<rect x="218" y="192" width="2" height="2" fill="#4c4c4c"/>
<rect x="218" y="206" width="2" height="2" fill="#4c4c4c"/>
<rect x="218" y="220" width="2" height="2" fill="#4c4c4c"/>
<rect x="218" y="234" width="2" height="2" fill="#4c4c4c"/>
<rect x="218" y="249" width="2" height="2" fill="#4c4c4c"/>
<rect x="218" y="263" width="2" height="2" fill="#4c4c4c"/>
<rect x="218" y="277" width="2" height="2" fill="#4c4c4c"/>
<rect x="218" y="292" width="2" height="2" fill="#4c4c4c"/>
<rect x="218" y="306" width="2" height="2" fill="#4c4c4c"/>
<rect x="218" y="320" width="2" height="2" fill="#4c4c4c"/>
<rect x="218" y="334" width="2" height="2" fill="#4c4c4c"/>
<rect x="218" y="349" width="2" height="2" fill="#4c4c4c"/>
<rect x="218" y="363" width="2" height="2" fill="#4c4c4c"/>
<rect x="218" y="377" width="2" height="2" fill="#4c4c4c"/>
<rect x="218" y="392" width="2" height="2" fill="#4c4c4c"/>
<rect x="218" y="406" width="2" height="2" fill="#4c4c4c"/>
<rect x="218" y="420" width="2" height="2" fill="#4c4c4c"/>
<rect x="218" y="434" width="2" height="2" fill="#4c4c4c"/>
<rect x="218" y="449" width="2" height="2" fill="#4c4c4c"/>
<rect x="218" y="463" width="2" height="2" fill="#4c4c4c"/>
<rect x="232" y="92" width="2" height="2" fill="#4c4c4c"/>
<rect x="232" y="106" width="2" height="2" fill="#4c4c4c"/>
<rect x="232" y="120" width="2" height="2" fill="#4c4c4c"/>
<rect x="232" y="135" width="2" height="2" fill="#4c4c4c"/>
<rect x="232" y="149" width="2" height="2" fill="#4c4c4c"/>
<rect x="232" y="163" width="2" height="2" fill="#4c4c4c"/>
<rect x="232" y="177" width="2" height="2" fill="#4c4c4c"/>
<rect x="232" y="192" width="2" height="2" fill="#4c4c4c"/>
<rect x="232" y="206" width="2" height="2" fill="#4c4c4c"/>
<rect x="232" y="220" width="2" height="2" fill="#4c4c4c"/>
<rect x="232" y="234" width="2" height="2" fill="#4c4c4c"/>
<rect x="232" y="249" width="2" height="2" fill="#4c4c4c"/>
<rect x="232" y="263" width="2" height="2" fill="#4c4c4c"/>
<rect x="232" y="277" width="2" height="2" fill="#4c4c4c"/>
<rect x="232" y="292" width="2" height="2" fill="#4c4c4c"/>
<rect x="232" y="306" width="2" height="2" fill="#4c4c4c"/>
<rect x="232" y="320" width="2" height="2" fill="#4c4c4c"/>
<rect x="232" y="334" width="2" height="2" fill="#4c4c4c"/>
<rect x="232" y="349" width="2" height="2" fill="#4c4c4c"/>
<rect x="232" y="363" width="2" height="2" fill="#4c4c4c"/>
<rect x="232" y="377" width="2" height="2" fill="#4c4c4c"/>
<rect x="232" y="392" width="2" height="2" fill="#4c4c4c"/>
<rect x="232" y="406" width="2" height="2" fill="#4c4c4c"/>
<rect x="232" y="420" width="2" height="2" fill="#4c4c4c"/>
<rect x="232" y="434" width="2" height="2" fill="#4c4c4c"/>
<rect x="232" y="449" width="2" height="2" fill="#4c4c4c"/>
<rect x="232" y="463" width="2" height="2" fill="#4c4c4c"/>
<rect x="246" y="92" width="2" height="2" fill="#4c4c4c"/>
<rect x="246" y="106" width="2" height="2" fill="#4c4c4c"/>
<rect x="246" y="120" width="2" height="2" fill="#4c4c4c"/>
<rect x="246" y="135" width="2" height="2" fill="#4c4c4c"/>
<rect x="246" y="149" width="2" height="2" fill="#4c4c4c"/>
<rect x="246" y="163" width="2" height="2" fill="#4c4c4c"/>
<rect x="246" y="177" width="2" height="2" fill="#4c4c4c"/>
<rect x="246" y="192" width="2" height="2" fill="#4c4c4c"/>
<rect x="246" y="206" width="2" height="2" fill="#4c4c4c"/>
<rect x="246" y="220" width="2" height="2" fill="#4c4c4c"/>
<rect x="246" y="234" width="2" height="2" fill="#4c4c4c"/>
<rect x="246" y="249" width="2" height="2" fill="#4c4c4c"/>
<rect x="246" y="263" width="2" height="2" fill="#4c4c4c"/>
<rect x="246" y="277" width="2" height="2" fill="#4c4c4c"/>
<rect x="246" y="292" width="2" height="2" fill="#4c4c4c"/>
<rect x="246" y="306" width="2" height="2" fill="#4c4c4c"/>
<rect x="246" y="320" width="2" height="2" fill="#4c4c4c"/>
<rect x="246" y="334" width="2" height="2" fill="#4c4c4c"/>
<rect x="246" y="349" width="2" height="2" fill="#4c4c4c"/>
<rect x="246" y="363" width="2" height="2" fill="#4c4c4c"/>
<rect x="246" y="377" width="2" height="2" fill="#4c4c4c"/>
<rect x="246" y="392" width="2" height="2" fill="#4c4c4c"/>
<rect x="246" y="406" width="2" height="2" fill="#4c4c4c"/>
<rect x="246" y="420" width="2" height="2" fill="#4c4c4c"/>
<rect x="246" y="434" width="2" height="2" fill="#4c4c4c"/>
<rect x="246" y="449" width="2" height="2" fill="#4c4c4c"/>
<rect x="246" y="463" width="2" height="2" fill="#4c4c4c"/>
<rect x="260" y="92" width="2" height="2" fill="#4c4c4c"/>
<rect x="260" y="106" width="2" height="2" fill="#4c4c4c"/>
<rect x="260" y="120" width="2" height="2" fill="#4c4c4c"/>
<rect x="260" y="135" width="2" height="2" fill="#4c4c4c"/>
<rect x="260" y="149" width="2" height="2" fill="#4c4c4c"/>
<rect x="260" y="163" width="2" height="2" fill="#4c4c4c"/>
<rect x="260" y="177" width="2" height="2" fill="#4c4c4c"/>
<rect x="260" y="192" width="2" height="2" fill="#4c4c4c"/>
<rect x="260" y="206" width="2" height="2" fill="#4c4c4c"/>
<rect x="260" y="220" width="2" height="2" fill="#4c4c4c"/>
<rect x="260" y="234" width="2" height="2" fill="#4c4c4c"/>
<rect x="260" y="249" width="2" height="2" fill="#4c4c4c"/>
<rect x="260" y="263" width="2" height="2" fill="#4c4c4c"/>
<rect x="260" y="277" width="2" height="2" fill="#4c4c4c"/>
<rect x="260" y="292" width="2" height="2" fill="#4c4c4c"/>
<rect x="260" y="306" width="2" height="2" fill="#4c4c4c"/>
<rect x="260" y="320" width="2" height="2" fill="#4c4c4c"/>
<rect x="260" y="334" width="2" height="2" fill="#4c4c4c"/>
<rect x="260" y="349" width="2" height="2" fill="#4c4c4c"/>
<rect x="260" y="363" width="2" height="2" fill="#4c4c4c"/>
<rect x="260" y="377" width="2" height="2" fill="#4c4c4c"/>
<rect x="260" y="392" width="2" height="2" fill="#4c4c4c"/>
<rect x="260" y="406" width="2" height="2" fill="#4c4c4c"/>
<rect x="260" y="420" width="2" height="2" fill="#4c4c4c"/>
<rect x="260" y="434" width="2" height="2" fill="#4c4c4c"/>
<rect x="260" y="449" width="2" height="2" fill="#4c4c4c"/>
<rect x="260" y="463" width="2" height="2" fill="#4c4c4c"/>
<rect x="275" y="92" width="2" height="2" fill="#4c4c4c"/>
<rect x="275" y="106" width="2" height="2" fill="#4c4c4c"/>
<rect x="275" y="120" width="2" height="2" fill="#4c4c4c"/>
<rect x="275" y="135" width="2" height="2" fill="#4c4c4c"/>
<rect x="275" y="149" width="2" height="2" fill="#4c4c4c"/>
<rect x="275" y="163" width="2" height="2" fill="#4c4c4c"/>
<rect x="275" y="177" width="2" height="2" fill="#4c4c4c"/>
<rect x="275" y="192" width="2" height="2" fill="#4c4c4c"/>
<rect x="275" y="206" width="2" height="2" fill="#4c4c4c"/>
<rect x="275" y="220" width="2" height="2" fill="#4c4c4c"/>
<rect x="275" y="234" width="2" height="2" fill="#4c4c4c"/>
<rect x="275" y="249" width="2" height="2" fill="#4c4c4c"/>
<rect x="275" y="263" width="2" height="2" fill="#4c4c4c"/>
<rect x="275" y="277" width="2" height="2" fill="#4c4c4c"/>
<rect x="275" y="292" width="2" height="2" fill="#4c4c4c"/>
<rect x="275" y="306" width="2" height="2" fill="#4c4c4c"/>
<rect x="275" y="320" width="2" height="2" fill="#4c4c4c"/>
<rect x="275" y="334" width="2" height="2" fill="#4c4c4c"/>
<rect x="275" y="349" width="2" height="2" fill="#4c4c4c"/>
<rect x="275" y="363" width="2" height="2" fill="#4c4c4c"/>
<rect x="275" y="377" width="2" height="2" fill="#4c4c4c"/>
<rect x="275" y="392" width="2" height="2" fill="#4c4c4c"/>
<rect x="275" y="406" width="2" height="2" fill="#4c4c4c"/>
<rect x="275" y="420" width="2" height="2" fill="#4c4c4c"/>
<rect x="275" y="434" width="2" height="2" fill="#4c4c4c"/>
<rect x="275" y="449" width="2" height="2" fill="#4c4c4c"/>
<rect x="275" y="463" width="2" height="2" fill="#4c4c4c"/>
<rect x="289" y="92" width="2" height="2" fill="#4c4c4c"/>
<rect x="289" y="106" width="2" height="2" fill="#4c4c4c"/>
<rect x="289" y="120" width="2" height="2" fill="#4c4c4c"/>
<rect x="289" y="135" width="2" height="2" fill="#4c4c4c"/>
<rect x="289" y="149" width="2" height="2" fill="#4c4c4c"/>
<rect x="289" y="163" width="2" height="2" fill="#4c4c4c"/>
<rect x="289" y="177" width="2" height="2" fill="#4c4c4c"/>
<rect x="289" y="192" width="2" height="2" fill="#4c4c4c"/>
<rect x="289" y="206" width="2" height="2" fill="#4c4c4c"/>
<rect x="289" y="220" width="2" height="2" fill="#4c4c4c"/>
<rect x="289" y="234" width="2" height="2" fill="#4c4c4c"/>
<rect x="289" y="249" width="2" height="2" fill="#4c4c4c"/>
<rect x="289" y="263" width="2" height="2" fill="#4c4c4c"/>
<rect x="289" y="277" width="2" height="2" fill="#4c4c4c"/>
<rect x="289" y="292" width="2" height="2" fill="#4c4c4c"/>
<rect x="289" y="306" width="2" height="2" fill="#4c4c4c"/>
<rect x="289" y="320" width="2" height="2" fill="#4c4c4c"/>
<rect x="289" y="334" width="2" height="2" fill="#4c4c4c"/>
<rect x="289" y="349" width="2" height="2" fill="#4c4c4c"/>
<rect x="289" y="363" width="2" height="2" fill="#4c4c4c"/>
<rect x="289" y="377" width="2" height="2" fill="#4c4c4c"/>
<rect x="289" y="392" width="2" height="2" fill="#4c4c4c"/>
<rect x="289" y="406" width="2" height="2" fill="#4c4c4c"/>
<rect x="289" y="420" width="2" height="2" fill="#4c4c4c"/>
<rect x="289" y="434" width="2" height="2" fill="#4c4c4c"/>
<rect x="289" y="449" width="2" height="2" fill="#4c4c4c"/>
<rect x="289" y="463" width="2" height="2" fill="#4c4c4c"/>
<rect x="303" y="92" width="2" height="2" fill="#4c4c4c"/>
<rect x="303" y="106" width="2" height="2" fill="#4c4c4c"/>
<rect x="303" y="120" width="2" height="2" fill="#4c4c4c"/>
<rect x="303" y="135" width="2" height="2" fill="#4c4c4c"/>
<rect x="303" y="149" width="2" height="2" fill="#4c4c4c"/>
<rect x="303" y="163" width="2" height="2" fill="#4c4c4c"/>
<rect x="303" y="177" width="2" height="2" fill="#4c4c4c"/>
<rect x="303" y="192" width="2" height="2" fill="#4c4c4c"/>
<rect x="303" y="206" width="2" height="2" fill="#4c4c4c"/>
<rect x="303" y="220" width="2" height="2" fill="#4c4c4c"/>
<rect x="303" y="234" width="2" height="2" fill="#4c4c4c"/>
<rect x="303" y="249" width="2" height="2" fill="#4c4c4c"/>
<rect x="303" y="263" width="2" height="2" fill="#4c4c4c"/>
<rect x="303" y="277" width="2" height="2" fill="#4c4c4c"/>
<rect x="303" y="292" width="2" height="2" fill="#4c4c4c"/>
<rect x="303" y="306" width="2" height="2" fill="#4c4c4c"/>
<rect x="303" y="320" width="2" height="2" fill="#4c4c4c"/>
<rect x="303" y="334" width="2" height="2" fill="#4c4c4c"/>
<rect x="303" y="349" width="2" height="2" fill="#4c4c4c"/>
<rect x="303" y="363" width="2" height="2" fill="#4c4c4c"/>
<rect x="303" y="377" width="2" height="2" fill="#4c4c4c"/>
<rect x="303" y="392" width="2" height="2" fill="#4c4c4c"/>
<rect x="303" y="406" width="2" height="2" fill="#4c4c4c"/>
<rect x="303" y="420" width="2" height="2" fill="#4c4c4c"/>
<rect x="303" y="434" width="2" height="2" fill="#4c4c4c"/>
<rect x="303" y="449" width="2" height="2" fill="#4c4c4c"/>
<rect x="303" y="463" width="2" height="2" fill="#4c4c4c"/>
<rect x="317" y="92" width="2" height="2" fill="#4c4c4c"/>
<rect x="317" y="106" width="2" height="2" fill="#4c4c4c"/>
<rect x="317" y="120" width="2" height="2" fill="#4c4c4c"/>
<rect x="317" y="135" width="2" height="2" fill="#4c4c4c"/>
<rect x="317" y="149" width="2" height="2" fill="#4c4c4c"/>
<rect x="317" y="163" width="2" height="2" fill="#4c4c4c"/>
<rect x="317" y="177" width="2" height="2" fill="#4c4c4c"/>
<rect x="317" y="192" width="2" height="2" fill="#4c4c4c"/>
<rect x="317" y="206" width="2" height="2" fill="#4c4c4c"/>
<rect x="317" y="220" width="2" height="2" fill="#4c4c4c"/>
<rect x="317" y="234" width="2" height="2" fill="#4c4c4c"/>
<rect x="317" y="249" width="2" height="2" fill="#4c4c4c"/>
<rect x="317" y="263" width="2" height="2" fill="#4c4c4c"/>
<rect x="317" y="277" width="2" height="2" fill="#4c4c4c"/>
<rect x="317" y="292" width="2" height="2" fill="#4c4c4c"/>
<rect x="317" y="306" width="2" height="2" fill="#4c4c4c"/>
<rect x="317" y="320" width="2" height="2" fill="#4c4c4c"/>
<rect x="317" y="334" width="2" height="2" fill="#4c4c4c"/>
<rect x="317" y="349" width="2" height="2" fill="#4c4c4c"/>
<rect x="317" y="363" width="2" height="2" fill="#4c4c4c"/>
<rect x="317" y="377" width="2" height="2" fill="#4c4c4c"/>
<rect x="317" y="392" width="2" height="2" fill="#4c4c4c"/>
<rect x="317" y="406" width="2" height="2" fill="#4c4c4c"/>
<rect x="317" y="420" width="2" height="2" fill="#4c4c4c"/>
<rect x="317" y="434" width="2" height="2" fill="#4c4c4c"/>
<rect x="317" y="449" width="2" height="2" fill="#4c4c4c"/>
<rect x="317" y="463" width="2" height="2" fill="#4c4c4c"/>
<rect x="332" y="92" width="2" height="2" fill="#4c4c4c"/>
<rect x="332" y="106" width="2" height="2" fill="#4c4c4c"/>
<rect x="332" y="120" width="2" height="2" fill="#4c4c4c"/>
<rect x="332" y="135" width="2" height="2" fill="#4c4c4c"/>
<rect x="332" y="149" width="2" height="2" fill="#4c4c4c"/>
<rect x="332" y="163" width="2" height="2" fill="#4c4c4c"/>
<rect x="332" y="177" width="2" height="2" fill="#4c4c4c"/>
<rect x="332" y="192" width="2" height="2" fill="#4c4c4c"/>
<rect x="332" y="206" width="2" height="2" fill="#4c4c4c"/>
<rect x="332" y="220" width="2" height="2" fill="#4c4c4c"/>
<rect x="332" y="234" width="2" height="2" fill="#4c4c4c"/>
<rect x="332" y="249" width="2" height="2" fill="#4c4c4c"/>
<rect x="332" y="263" width="2" height="2" fill="#4c4c4c"/>
<rect x="332" y="277" width="2" height="2" fill="#4c4c4c"/>
<rect x="332" y="292" width="2" height="2" fill="#4c4c4c"/>
<rect x="332" y="306" width="2" height="2" fill="#4c4c4c"/>
<rect x="332" y="320" width="2" height="2" fill="#4c4c4c"/>
<rect x="332" y="334" width="2" height="2" fill="#4c4c4c"/>
<rect x="332" y="349" width="2" height="2" fill="#4c4c4c"/>
<rect x="332" y="363" width="2" height="2" fill="#4c4c4c"/>
<rect x="332" y="377" width="2" height="2" fill="#4c4c4c"/>
<rect x="332" y="392" width="2" height="2" fill="#4c4c4c"/>
<rect x="332" y="406" width="2" height="2" fill="#4c4c4c"/>
<rect x="332" y="420" width="2" height="2" fill="#4c4c4c"/>
<rect x="332" y="434" width="2" height="2" fill="#4c4c4c"/>
<rect x="332" y="449" width="2" height="2" fill="#4c4c4c"/>
<rect x="332" y="463" width="2" height="2" fill="#4c4c4c"/>
<rect x="346" y="92" width="2" height="2" fill="#4c4c4c"/>
<rect x="346" y="106" width="2" height="2" fill="#4c4c4c"/>
<rect x="346" y="120" width="2" height="2" fill="#4c4c4c"/>
<rect x="346" y="135" width="2" height="2" fill="#4c4c4c"/>
<rect x="346" y="149" width="2" height="2" fill="#4c4c4c"/>
<rect x="346" y="163" width="2" height="2" fill="#4c4c4c"/>
<rect x="346" y="177" width="2" height="2" fill="#4c4c4c"/>
<rect x="346" y="192" width="2" height="2" fill="#4c4c4c"/>
<rect x="346" y="206" width="2" height="2" fill="#4c4c4c"/>
<rect x="346" y="220" width="2" height="2" fill="#4c4c4c"/>
<rect x="346" y="234" width="2" height="2" fill="#4c4c4c"/>
<rect x="346" y="249" width="2" height="2" fill="#4c4c4c"/>
<rect x="346" y="263" width="2" height="2" fill="#4c4c4c"/>
<rect x="346" y="277" width="2" height="2" fill="#4c4c4c"/>
<rect x="346" y="292" width="2" height="2" fill="#4c4c4c"/>
<rect x="346" y="306" width="2" height="2" fill="#4c4c4c"/>
<rect x="346" y="320" width="2" height="2" fill="#4c4c4c"/>
<rect x="346" y="334" width="2" height="2" fill="#4c4c4c"/>
<rect x="346" y="349" width="2" height="2" fill="#4c4c4c"/>
<rect x="346" y="363" width="2" height="2" fill="#4c4c4c"/>
<rect x="346" y="377" width="2" height="2" fill="#4c4c4c"/>
<rect x="346" y="392" width="2" height="2" fill="#4c4c4c"/>
<rect x="346" y="406" width="2" height="2" fill="#4c4c4c"/>
<rect x="346" y="420" width="2" height="2" fill="#4c4c4c"/>
<rect x="346" y="434" width="2" height="2" fill="#4c4c4c"/>
<rect x="346" y="449" width="2" height="2" fill="#4c4c4c"/>
<rect x="346" y="463" width="2" height="2" fill="#4c4c4c"/>
<rect x="360" y="92" width="2" height="2" fill="#4c4c4c"/>
<rect x="360" y="106" width="2" height="2" fill="#4c4c4c"/>
<rect x="360" y="120" width="2" height="2" fill="#4c4c4c"/>
<rect x="360" y="135" width="2" height="2" fill="#4c4c4c"/>
<rect x="360" y="149" width="2" height="2" fill="#4c4c4c"/>
<rect x="360" y="163" width="2" height="2" fill="#4c4c4c"/>
<rect x="360" y="177" width="2" height="2" fill="#4c4c4c"/>
<rect x="360" y="192" width="2" height="2" fill="#4c4c4c"/>
<rect x="360" y="206" width="2" height="2" fill="#4c4c4c"/>
<rect x="360" y="220" width="2" height="2" fill="#4c4c4c"/>
<rect x="360" y="234" width="2" height="2" fill="#4c4c4c"/>
<rect x="360" y="249" width="2" height="2" fill="#4c4c4c"/>
<rect x="360" y="263" width="2" height="2" fill="#4c4c4c"/>
<rect x="360" y="277" width="2" height="2" fill="#4c4c4c"/>
<rect x="360" y="292" width="2" height="2" fill="#4c4c4c"/>
<rect x="360" y="306" width="2" height="2" fill="#4c4c4c"/>
<rect x="360" y="320" width="2" height="2" fill="#4c4c4c"/>
<rect x="360" y="334" width="2" height="2" fill="#4c4c4c"/>
<rect x="360" y="349" width="2" height="2" fill="#4c4c4c"/>
<rect x="360" y="363" width="2" height="2" fill="#4c4c4c"/>
<rect x="360" y="377" width="2" height="2" fill="#4c4c4c"/>
<rect x="360" y="392" width="2" height="2" fill="#4c4c4c"/>
<rect x="360" y="406" width="2" height="2" fill="#4c4c4c"/>
<rect x="360" y="420" width="2" height="2" fill="#4c4c4c"/>
<rect x="360" y="434" width="2" height="2" fill="#4c4c4c"/>
<rect x="360" y="449" width="2" height="2" fill="#4c4c4c"/>
<rect x="360" y="463" width="2" height="2" fill="#4c4c4c"/>
<rect x="375" y="92" width="2" height="2" fill="#4c4c4c"/>
<rect x="375" y="106" width="2" height="2" fill="#4c4c4c"/>
<rect x="375" y="120" width="2" height="2" fill="#4c4c4c"/>
<rect x="375" y="135" width="2" height="2" fill="#4c4c4c"/>
<rect x="375" y="149" width="2" height="2" fill="#4c4c4c"/>
<rect x="375" y="163" width="2" height="2" fill="#4c4c4c"/>
<rect x="375" y="177" width="2" height="2" fill="#4c4c4c"/>
<rect x="375" y="192" width="2" height="2" fill="#4c4c4c"/>
<rect x="375" y="206" width="2" height="2" fill="#4c4c4c"/>
<rect x="375" y="220" width="2" height="2" fill="#4c4c4c"/>
<rect x="375" y="234" width="2" height="2" fill="#4c4c4c"/>
<rect x="375" y="249" width="2" height="2" fill="#4c4c4c"/>
<rect x="375" y="263" width="2" height="2" fill="#4c4c4c"/>
<rect x="375" y="277" width="2" height="2" fill="#4c4c4c"/>
<rect x="375" y="292" width="2" height="2" fill="#4c4c4c"/>
<rect x="375" y="306" width="2" height="2" fill="#4c4c4c"/>
<rect x="375" y="320" width="2" height="2" fill="#4c4c4c"/>
<rect x="375" y="334" width="2" height="2" fill="#4c4c4c"/>
<rect x="375" y="349" width="2" height="2" fill="#4c4c4c"/>
<rect x="375" y="363" width="2" height="2" fill="#4c4c4c"/>
<rect x="375" y="377" width="2" height="2" fill="#4c4c4c"/>
<rect x="375" y="392" width="2" height="2" fill="#4c4c4c"/>
<rect x="375" y="406" width="2" height="2" fill="#4c4c4c"/>
<rect x="375" y="420" width="2" height="2" fill="#4c4c4c"/>
<rect x="375" y="434" width="2" height="2" fill="#4c4c4c"/>
<rect x="375" y="449" width="2" height="2" fill="#4c4c4c"/>
<rect x="375" y="463" width="2" height="2" fill="#4c4c4c"/>
<rect x="389" y="92" width="2" height="2" fill="#4c4c4c"/>
<rect x="389" y="106" width="2" height="2" fill="#4c4c4c"/>
<rect x="389" y="120" width="2" height="2" fill="#4c4c4c"/>
<rect x="389" y="135" width="2" height="2" fill="#4c4c4c"/>
<rect x="389" y="149" width="2" height="2" fill="#4c4c4c"/>
<rect x="389" y="163" width="2" height="2" fill="#4c4c4c"/>
<rect x="389" y="177" width="2" height="2" fill="#4c4c4c"/>
<rect x="389" y="192" width="2" height="2" fill="#4c4c4c"/>
<rect x="389" y="206" width="2" height="2" fill="#4c4c4c"/>
<rect x="389" y="220" width="2" height="2" fill="#4c4c4c"/>
<rect x="389" y="234" width="2" height="2" fill="#4c4c4c"/>
<rect x="389" y="249" width="2" height="2" fill="#4c4c4c"/>
<rect x="389" y="263" width="2" height="2" fill="#4c4c4c"/>
<rect x="389" y="277" width="2" height="2" fill="#4c4c4c"/>
<rect x="389" y="292" width="2" height="2" fill="#4c4c4c"/>
<rect x="389" y="306" width="2" height="2" fill="#4c4c4c"/>
<rect x="389" y="320" width="2" height="2" fill="#4c4c4c"/>
<rect x="389" y="334" width="2" height="2" fill="#4c4c4c"/>
<rect x="389" y="349" width="2" height="2" fill="#4c4c4c"/>
<rect x="389" y="363" width="2" height="2" fill="#4c4c4c"/>
<rect x="389" y="377" width="2" height="2" fill="#4c4c4c"/>
<rect x="389" y="392" width="2" height="2" fill="#4c4c4c"/>
<rect x="389" y="406" width="2" height="2" fill="#4c4c4c"/>
<rect x="389" y="420" width="2" height="2" fill="#4c4c4c"/>
<rect x="389" y="434" width="2" height="2" fill="#4c4c4c"/>
<rect x="389" y="449" width="2" height="2" fill="#4c4c4c"/>
<rect x="389" y="463" width="2" height="2" fill="#4c4c4c"/>
<rect x="403" y="92" width="2" height="2" fill="#4c4c4c"/>
<rect x="403" y="106" width="2" height="2" fill="#4c4c4c"/>
<rect x="403" y="120" width="2" height="2" fill="#4c4c4c"/>
<rect x="403" y="135" width="2" height="2" fill="#4c4c4c"/>
<rect x="403" y="149" width="2" height="2" fill="#4c4c4c"/>
<rect x="403" y="163" width="2" height="2" fill="#4c4c4c"/>
<rect x="403" y="177" width="2" height="2" fill="#4c4c4c"/>
<rect x="403" y="192" width="2" height="2" fill="#4c4c4c"/>
<rect x="403" y="206" width="2" height="2" fill="#4c4c4c"/>
<rect x="403" y="220" width="2" height="2" fill="#4c4c4c"/>
<rect x="403" y="234" width="2" height="2" fill="#4c4c4c"/>
<rect x="403" y="249" width="2" height="2" fill="#4c4c4c"/>
<rect x="403" y="263" width="2" height="2" fill="#4c4c4c"/>
<rect x="403" y="277" width="2" height="2" fill="#4c4c4c"/>
<rect x="403" y="292" width="2" height="2" fill="#4c4c4c"/>
<rect x="403" y="306" width="2" height="2" fill="#4c4c4c"/>
<rect x="403" y="320" width="2" height="2" fill="#4c4c4c"/>
<rect x="403" y="334" width="2" height="2" fill="#4c4c4c"/>
<rect x="403" y="349" width="2" height="2" fill="#4c4c4c"/>
<rect x="403" y="363" width="2" height="2" fill="#4c4c4c"/>
<rect x="403" y="377" width="2" height="2" fill="#4c4c4c"/>
<rect x="403" y="392" width="2" height="2" fill="#4c4c4c"/>
<rect x="403" y="406" width="2" height="2" fill="#4c4c4c"/>
<rect x="403" y="420" width="2" height="2" fill="#4c4c4c"/>
<rect x="403" y="434" width="2" height="2" fill="#4c4c4c"/>
<rect x="403" y="449" width="2" height="2" fill="#4c4c4c"/>
<rect x="403" y="463" width="2" height="2" fill="#4c4c4c"/>
<rect x="417" y="92" width="2" height="2" fill="#4c4c4c"/>
<rect x="417" y="106" width="2" height="2" fill="#4c4c4c"/>
<rect x="417" y="120" width="2" height="2" fill="#4c4c4c"/>
<rect x="417" y="135" width="2" height="2" fill="#4c4c4c"/>
<rect x="417" y="149" width="2" height="2" fill="#4c4c4c"/>
<rect x="417" y="163" width="2" height="2" fill="#4c4c4c"/>
<rect x="417" y="177" width="2" height="2" fill="#4c4c4c"/>
<rect x="417" y="192" width="2" height="2" fill="#4c4c4c"/>
<rect x="417" y="206" width="2" height="2" fill="#4c4c4c"/>
<rect x="417" y="220" width="2" height="2" fill="#4c4c4c"/>
<rect x="417" y="234" width="2" height="2" fill="#4c4c4c"/>
<rect x="417" y="249" width="2" height="2" fill="#4c4c4c"/>
<rect x="417" y="263" width="2" height="2" fill="#4c4c4c"/>
<rect x="417" y="277" width="2" height="2" fill="#4c4c4c"/>
<rect x="417" y="292" width="2" height="2" fill="#4c4c4c"/>
<rect x="417" y="306" width="2" height="2" fill="#4c4c4c"/>
<rect x="417" y="320" width="2" height="2" fill="#4c4c4c"/>
<rect x="417" y="334" width="2" height="2" fill="#4c4c4c"/>
<rect x="417" y="349" width="2" height="2" fill="#4c4c4c"/>
<rect x="417" y="363" width="2" height="2" fill="#4c4c4c"/>
<rect x="417" y="377" width="2" height="2" fill="#4c4c4c"/>
<rect x="417" y="392" width="2" height="2" fill="#4c4c4c"/>
<rect x="417" y="406" width="2" height="2" fill="#4c4c4c"/>
<rect x="417" y="420" width="2" height="2" fill="#4c4c4c"/>
<rect x="417" y="434" width="2" height="2" fill="#4c4c4c"/>
<rect x="417" y="449" width="2" height="2" fill="#4c4c4c"/>
<rect x="417" y="463" width="2" height="2" fill="#4c4c4c"/>
<rect x="432" y="92" width="2" height="2" fill="#4c4c4c"/>
<rect x="432" y="106" width="2" height="2" fill="#4c4c4c"/>
<rect x="432" y="120" width="2" height="2" fill="#4c4c4c"/>
<rect x="432" y="135" width="2" height="2" fill="#4c4c4c"/>
<rect x="432" y="149" width="2" height="2" fill="#4c4c4c"/>
<rect x="432" y="163" width="2" height="2" fill="#4c4c4c"/>
<rect x="432" y="177" width="2" height="2" fill="#4c4c4c"/>
<rect x="432" y="192" width="2" height="2" fill="#4c4c4c"/>
<rect x="432" y="206" width="2" height="2" fill="#4c4c4c"/>
<rect x="432" y="220" width="2" height="2" fill="#4c4c4c"/>
<rect x="432" y="234" width="2" height="2" fill="#4c4c4c"/>
<rect x="432" y="249" width="2" height="2" fill="#4c4c4c"/>
<rect x="432" y="263" width="2" height="2" fill="#4c4c4c"/>
<rect x="432" y="277" width="2" height="2" fill="#4c4c4c"/>
<rect x="432" y="292" width="2" height="2" fill="#4c4c4c"/>
<rect x="432" y="306" width="2" height="2" fill="#4c4c4c"/>
<rect x="432" y="320" width="2" height="2" fill="#4c4c4c"/>
<rect x="432" y="334" width="2" height="2" fill="#4c4c4c"/>
<rect x="432" y="349" width="2" height="2" fill="#4c4c4c"/>
<rect x="432" y="363" width="2" height="2" fill="#4c4c4c"/>
<rect x="432" y="377" width="2" height="2" fill="#4c4c4c"/>
<rect x="432" y="392" width="2" height="2" fill="#4c4c4c"/>
<rect x="432" y="406" width="2" height="2" fill="#4c4c4c"/>
<rect x="432" y="420" width="2" height="2" fill="#4c4c4c"/>
<rect x="432" y="434" width="2" height="2" fill="#4c4c4c"/>
<rect x="432" y="449" width="2" height="2" fill="#4c4c4c"/>
<rect x="432" y="463" width="2" height="2" fill="#4c4c4c"/>
<rect x="446" y="92" width="2" height="2" fill="#4c4c4c"/>
<rect x="446" y="106" width="2" height="2" fill="#4c4c4c"/>
<rect x="446" y="120" width="2" height="2" fill="#4c4c4c"/>
<rect x="446" y="135" width="2" height="2" fill="#4c4c4c"/>
<rect x="446" y="149" width="2" height="2" fill="#4c4c4c"/>
<rect x="446" y="163" width="2" height="2" fill="#4c4c4c"/>
<rect x="446" y="177" width="2" height="2" fill="#4c4c4c"/>
<rect x="446" y="192" width="2" height="2" fill="#4c4c4c"/>
<rect x="446" y="206" width="2" height="2" fill="#4c4c4c"/>
<rect x="446" y="220" width="2" height="2" fill="#4c4c4c"/>
<rect x="446" y="234" width="2" height="2" fill="#4c4c4c"/>
<rect x="446" y="249" width="2" height="2" fill="#4c4c4c"/>
<rect x="446" y="263" width="2" height="2" fill="#4c4c4c"/>
<rect x="446" y="277" width="2" height="2" fill="#4c4c4c"/>
<rect x="446" y="292" width="2" height="2" fill="#4c4c4c"/>
<rect x="446" y="306" width="2" height="2" fill="#4c4c4c"/>
<rect x="446" y="320" width="2" height="2" fill="#4c4c4c"/>
<rect x="446" y="334" width="2" height="2" fill="#4c4c4c"/>
<rect x="446" y="349" width="2" height="2" fill="#4c4c4c"/>
<rect x="446" y="363" width="2" height="2" fill="#4c4c4c"/>
<rect x="446" y="377" width="2" height="2" fill="#4c4c4c"/>
<rect x="446" y="392" width="2" height="2" fill="#4c4c4c"/>
<rect x="446" y="406" width="2" height="2" fill="#4c4c4c"/>
<rect x="446" y="420" width="2" height="2" fill="#4c4c4c"/>
<rect x="446" y="434" width="2" height="2" fill="#4c4c4c"/>
<rect x="446" y="449" width="2" height="2" fill="#4c4c4c"/>
<rect x="446" y="463" width="2" height="2" fill="#4c4c4c"/>
<rect x="460" y="92" width="2" height="2" fill="#4c4c4c"/>
<rect x="460" y="106" width="2" height="2" fill="#4c4c4c"/>
<rect x="460" y="120" width="2" height="2" fill="#4c4c4c"/>
<rect x="460" y="135" width="2" height="2" fill="#4c4c4c"/>
<rect x="460" y="149" width="2" height="2" fill="#4c4c4c"/>
<rect x="460" y="163" width="2" height="2" fill="#4c4c4c"/>
<rect x="460" y="177" width="2" height="2" fill="#4c4c4c"/>
<rect x="460" y="192" width="2" height="2" fill="#4c4c4c"/>
<rect x="460" y="206" width="2" height="2" fill="#4c4c4c"/>
<rect x="460" y="220" width="2" height="2" fill="#4c4c4c"/>
<rect x="460" y="234" width="2" height="2" fill="#4c4c4c"/>
<rect x="460" y="249" width="2" height="2" fill="#4c4c4c"/>
<rect x="460" y="263" width="2" height="2" fill="#4c4c4c"/>
<rect x="460" y="277" width="2" height="2" fill="#4c4c4c"/>
<rect x="460" y="292" width="2" height="2" fill="#4c4c4c"/>
<rect x="460" y="306" width="2" height="2" fill="#4c4c4c"/>
<rect x="460" y="320" width="2" height="2" fill="#4c4c4c"/>
<rect x="460" y="334" width="2" height="2" fill="#4c4c4c"/>
<rect x="460" y="349" width="2" height="2" fill="#4c4c4c"/>
<rect x="460" y="363" width="2" height="2" fill="#4c4c4c"/>
<rect x="460" y="377" width="2" height="2" fill="#4c4c4c"/>
<rect x="460" y="392" width="2" height="2" fill="#4c4c4c"/>
<rect x="460" y="406" width="2" height="2" fill="#4c4c4c"/>
<rect x="460" y="420" width="2" height="2" fill="#4c4c4c"/>
<rect x="460" y="434" width="2" height="2" fill="#4c4c4c"/>
<rect x="460" y="449" width="2" height="2" fill="#4c4c4c"/>
<rect x="460" y="463" width="2" height="2" fill="#4c4c4c"/>
<rect x="475" y="92" width="2" height="2" fill="#4c4c4c"/>
<rect x="475" y="106" width="2" height="2" fill="#4c4c4c"/>
<rect x="475" y="120" width="2" height="2" fill="#4c4c4c"/>
<rect x="475" y="135" width="2" height="2" fill="#4c4c4c"/>
<rect x="475" y="149" width="2" height="2" fill="#4c4c4c"/>
<rect x="475" y="163" width="2" height="2" fill="#4c4c4c"/>
<rect x="475" y="177" width="2" height="2" fill="#4c4c4c"/>
<rect x="475" y="192" width="2" height="2" fill="#4c4c4c"/>
<rect x="475" y="206" width="2" height="2" fill="#4c4c4c"/>
<rect x="475" y="220" width="2" height="2" fill="#4c4c4c"/>
<rect x="475" y="234" width="2" height="2" fill="#4c4c4c"/>
<rect x="475" y="249" width="2" height="2" fill="#4c4c4c"/>
<rect x="475" y="263" width="2" height="2" fill="#4c4c4c"/>
<rect x="475" y="277" width="2" height="2" fill="#4c4c4c"/>
<rect x="475" y="292" width="2" height="2" fill="#4c4c4c"/>
<rect x="475" y="306" width="2" height="2" fill="#4c4c4c"/>
<rect x="475" y="320" width="2" height="2" fill="#4c4c4c"/>
<rect x="475" y="334" width="2" height="2" fill="#4c4c4c"/>
<rect x="475" y="349" width="2" height="2" fill="#4c4c4c"/>
<rect x="475" y="363" width="2" height="2" fill="#4c4c4c"/>
<rect x="475" y="377" width="2" height="2" fill="#4c4c4c"/>
<rect x="475" y="392" width="2" height="2" fill="#4c4c4c"/>
<rect x="475" y="406" width="2" height="2" fill="#4c4c4c"/>
<rect x="475" y="420" width="2" height="2" fill="#4c4c4c"/>
<rect x="475" y="434" width="2" height="2" fill="#4c4c4c"/>
<rect x="475" y="449" width="2" height="2" fill="#4c4c4c"/>
<rect x="475" y="463" width="2" height="2" fill="#4c4c4c"/>
<rect x="489" y="92" width="2" height="2" fill="#4c4c4c"/>
<rect x="489" y="106" width="2" height="2" fill="#4c4c4c"/>
<rect x="489" y="120" width="2" height="2" fill="#4c4c4c"/>
<rect x="489" y="135" width="2" height="2" fill="#4c4c4c"/>
<rect x="489" y="149" width="2" height="2" fill="#4c4c4c"/>
<rect x="489" y="163" width="2" height="2" fill="#4c4c4c"/>
<rect x="489" y="177" width="2" height="2" fill="#4c4c4c"/>
<rect x="489" y="192" width="2" height="2" fill="#4c4c4c"/>
<rect x="489" y="206" width="2" height="2" fill="#4c4c4c"/>
<rect x="489" y="220" width="2" height="2" fill="#4c4c4c"/>
<rect x="489" y="234" width="2" height="2" fill="#4c4c4c"/>
<rect x="489" y="249" width="2" height="2" fill="#4c4c4c"/>
<rect x="489" y="263" width="2" height="2" fill="#4c4c4c"/>
<rect x="489" y="277" width="2" height="2" fill="#4c4c4c"/>
<rect x="489" y="292" width="2" height="2" fill="#4c4c4c"/>
<rect x="489" y="306" width="2" height="2" fill="#4c4c4c"/>
<rect x="489" y="320" width="2" height="2" fill="#4c4c4c"/>
<rect x="489" y="334" width="2" height="2" fill="#4c4c4c"/>
<rect x="489" y="349" width="2" height="2" fill="#4c4c4c"/>
<rect x="489" y="363" width="2" height="2" fill="#4c4c4c"/>
<rect x="489" y="377" width="2" height="2" fill="#4c4c4c"/>
<rect x="489" y="392" width="2" height="2" fill="#4c4c4c"/>
<rect x="489" y="406" width="2" height="2" fill="#4c4c4c"/>
<rect x="489" y="420" width="2" height="2" fill="#4c4c4c"/>
<rect x="489" y="434" width="2" height="2" fill="#4c4c4c"/>
<rect x="489" y="449" width="2" height="2" fill="#4c4c4c"/>
<rect x="489" y="463" width="2" height="2" fill="#4c4c4c"/>
<rect x="503" y="92" width="2" height="2" fill="#4c4c4c"/>
<rect x="503" y="106" width="2" height="2" fill="#4c4c4c"/>
<rect x="503" y="120" width="2" height="2" fill="#4c4c4c"/>
<rect x="503" y="135" width="2" height="2" fill="#4c4c4c"/>
<rect x="503" y="149" width="2" height="2" fill="#4c4c4c"/>
<rect x="503" y="163" width="2" height="2" fill="#4c4c4c"/>
<rect x="503" y="177" width="2" height="2" fill="#4c4c4c"/>
<rect x="503" y="192" width="2" height="2" fill="#4c4c4c"/>
<rect x="503" y="206" width="2" height="2" fill="#4c4c4c"/>
<rect x="503" y="220" width="2" height="2" fill="#4c4c4c"/>
<rect x="503" y="234" width="2" height="2" fill="#4c4c4c"/>
<rect x="503" y="249" width="2" height="2" fill="#4c4c4c"/>
<rect x="503" y="263" width="2" height="2" fill="#4c4c4c"/>
<rect x="503" y="277" width="2" height="2" fill="#4c4c4c"/>
<rect x="503" y="292" width="2" height="2" fill="#4c4c4c"/>
<rect x="503" y="306" width="2" height="2" fill="#4c4c4c"/>
<rect x="503" y="320" width="2" height="2" fill="#4c4c4c"/>
<rect x="503" y="334" width="2" height="2" fill="#4c4c4c"/>
<rect x="503" y="349" width="2" height="2" fill="#4c4c4c"/>
<rect x="503" y="363" width="2" height="2" fill="#4c4c4c"/>
<rect x="503" y="377" width="2" height="2" fill="#4c4c4c"/>
<rect x="503" y="392" width="2" height="2" fill="#4c4c4c"/>
<rect x="503" y="406" width="2" height="2" fill="#4c4c4c"/>
<rect x="503" y="420" width="2" height="2" fill="#4c4c4c"/>
<rect x="503" y="434" width="2" height="2" fill="#4c4c4c"/>
<rect x="503" y="449" width="2" height="2" fill="#4c4c4c"/>
<rect x="503" y="463" width="2" height="2" fill="#4c4c4c"/>
<rect x="517" y="92" width="2" height="2" fill="#4c4c4c"/>
<rect x="517" y="106" width="2" height="2" fill="#4c4c4c"/>
<rect x="517" y="120" width="2" height="2" fill="#4c4c4c"/>
<rect x="517" y="135" width="2" height="2" fill="#4c4c4c"/>
<rect x="517" y="149" width="2" height="2" fill="#4c4c4c"/>
<rect x="517" y="163" width="2" height="2" fill="#4c4c4c"/>
<rect x="517" y="177" width="2" height="2" fill="#4c4c4c"/>
<rect x="517" y="192" width="2" height="2" fill="#4c4c4c"/>
<rect x="517" y="206" width="2" height="2" fill="#4c4c4c"/>
<rect x="517" y="220" width="2" height="2" fill="#4c4c4c"/>
<rect x="517" y="234" width="2" height="2" fill="#4c4c4c"/>
<rect x="517" y="249" width="2" height="2" fill="#4c4c4c"/>
<rect x="517" y="263" width="2" height="2" fill="#4c4c4c"/>
<rect x="517" y="277" width="2" height="2" fill="#4c4c4c"/>
<rect x="517" y="292" width="2" height="2" fill="#4c4c4c"/>
<rect x="517" y="306" width="2" height="2" fill="#4c4c4c"/>
<rect x="517" y="320" width="2" height="2" fill="#4c4c4c"/>
<rect x="517" y="334" width="2" height="2" fill="#4c4c4c"/>
<rect x="517" y="349" width="2" height="2" fill="#4c4c4c"/>
<rect x="517" y="363" width="2" height="2" fill="#4c4c4c"/>
<rect x="517" y="377" width="2" height="2" fill="#4c4c4c"/>
<rect x="517" y="392" width="2" height="2" fill="#4c4c4c"/>
<rect x="517" y="406" width="2" height="2" fill="#4c4c4c"/>
<rect x="517" y="420" width="2" height="2" fill="#4c4c4c"/>
<rect x="517" y="434" width="2" height="2" fill="#4c4c4c"/>
<rect x="517" y="449" width="2" height="2" fill="#4c4c4c"/>
<rect x="517" y="463" width="2" height="2" fill="#4c4c4c"/>
<rect x="532" y="92" width="2" height="2" fill="#4c4c4c"/>
<rect x="532" y="106" width="2" height="2" fill="#4c4c4c"/>
<rect x="532" y="120" width="2" height="2" fill="#4c4c4c"/>
<rect x="532" y="135" width="2" height="2" fill="#4c4c4c"/>
<rect x="532" y="149" width="2" height="2" fill="#4c4c4c"/>
<rect x="532" y="163" width="2" height="2" fill="#4c4c4c"/>
<rect x="532" y="177" width="2" height="2" fill="#4c4c4c"/>
<rect x="532" y="192" width="2" height="2" fill="#4c4c4c"/>
<rect x="532" y="206" width="2" height="2" fill="#4c4c4c"/>
<rect x="532" y="220" width="2" height="2" fill="#4c4c4c"/>
<rect x="532" y="234" width="2" height="2" fill="#4c4c4c"/>
<rect x="532" y="249" width="2" height="2" fill="#4c4c4c"/>
<rect x="532" y="263" width="2" height="2" fill="#4c4c4c"/>
<rect x="532" y="277" width="2" height="2" fill="#4c4c4c"/>
<rect x="532" y="292" width="2" height="2" fill="#4c4c4c"/>
<rect x="532" y="306" width="2" height="2" fill="#4c4c4c"/>
<rect x="532" y="320" width="2" height="2" fill="#4c4c4c"/>
<rect x="532" y="334" width="2" height="2" fill="#4c4c4c"/>
<rect x="532" y="349" width="2" height="2" fill="#4c4c4c"/>
<rect x="532" y="363" width="2" height="2" fill="#4c4c4c"/>
<rect x="532" y="377" width="2" height="2" fill="#4c4c4c"/>
<rect x="532" y="392" width="2" height="2" fill="#4c4c4c"/>
<rect x="532" y="406" width="2" height="2" fill="#4c4c4c"/>
<rect x="532" y="420" width="2" height="2" fill="#4c4c4c"/>
<rect x="532" y="434" width="2" height="2" fill="#4c4c4c"/>
<rect x="532" y="449" width="2" height="2" fill="#4c4c4c"/>
<rect x="532" y="463" width="2" height="2" fill="#4c4c4c"/>
<rect x="546" y="92" width="2" height="2" fill="#4c4c4c"/>
<rect x="546" y="106" width="2" height="2" fill="#4c4c4c"/>
<rect x="546" y="120" width="2" height="2" fill="#4c4c4c"/>
<rect x="546" y="135" width="2" height="2" fill="#4c4c4c"/>
<rect x="546" y="149" width="2" height="2" fill="#4c4c4c"/>
<rect x="546" y="163" width="2" height="2" fill="#4c4c4c"/>
<rect x="546" y="177" width="2" height="2" fill="#4c4c4c"/>
<rect x="546" y="192" width="2" height="2" fill="#4c4c4c"/>
<rect x="546" y="206" width="2" height="2" fill="#4c4c4c"/>
<rect x="546" y="220" width="2" height="2" fill="#4c4c4c"/>
<rect x="546" y="234" width="2" height="2" fill="#4c4c4c"/>
<rect x="546" y="249" width="2" height="2" fill="#4c4c4c"/>
<rect x="546" y="263" width="2" height="2" fill="#4c4c4c"/>
<rect x="546" y="277" width="2" height="2" fill="#4c4c4c"/>
<rect x="546" y="292" width="2" height="2" fill="#4c4c4c"/>
<rect x="546" y="306" width="2" height="2" fill="#4c4c4c"/>
<rect x="546" y="320" width="2" height="2" fill="#4c4c4c"/>
<rect x="546" y="334" width="2" height="2" fill="#4c4c4c"/>
<rect x="546" y="349" width="2" height="2" fill="#4c4c4c"/>
<rect x="546" y="363" width="2" height="2" fill="#4c4c4c"/>
<rect x="546" y="377" width="2" height="2" fill="#4c4c4c"/>
<rect x="546" y="392" width="2" height="2" fill="#4c4c4c"/>
<rect x="546" y="406" width="2" height="2" fill="#4c4c4c"/>
<rect x="546" y="420" width="2" height="2" fill="#4c4c4c"/>
<rect x="546" y="434" width="2" height="2" fill="#4c4c4c"/>
<rect x="546" y="449" width="2" height="2" fill="#4c4c4c"/>
<rect x="546" y="463" width="2" height="2" fill="#4c4c4c"/>
<rect x="560" y="92" width="2" height="2" fill="#4c4c4c"/>
<rect x="560" y="106" width="2" height="2" fill="#4c4c4c"/>
<rect x="560" y="120" width="2" height="2" fill="#4c4c4c"/>
<rect x="560" y="135" width="2" height="2" fill="#4c4c4c"/>
<rect x="560" y="149" width="2" height="2" fill="#4c4c4c"/>
<rect x="560" y="163" width="2" height="2" fill="#4c4c4c"/>
<rect x="560" y="177" width="2" height="2" fill="#4c4c4c"/>
<rect x="560" y="192" width="2" height="2" fill="#4c4c4c"/>
<rect x="560" y="206" width="2" height="2" fill="#4c4c4c"/>
<rect x="560" y="220" width="2" height="2" fill="#4c4c4c"/>
<rect x="560" y="234" width="2" height="2" fill="#4c4c4c"/>
<rect x="560" y="249" width="2" height="2" fill="#4c4c4c"/>
<rect x="560" y="263" width="2" height="2" fill="#4c4c4c"/>
<rect x="560" y="277" width="2" height="2" fill="#4c4c4c"/>
<rect x="560" y="292" width="2" height="2" fill="#4c4c4c"/>
<rect x="560" y="306" width="2" height="2" fill="#4c4c4c"/>
<rect x="560" y="320" width="2" height="2" fill="#4c4c4c"/>
<rect x="560" y="334" width="2" height="2" fill="#4c4c4c"/>
<rect x="560" y="349" width="2" height="2" fill="#4c4c4c"/>
<rect x="560" y="363" width="2" height="2" fill="#4c4c4c"/>
<rect x="560" y="377" width="2" height="2" fill="#4c4c4c"/>
<rect x="560" y="392" width="2" height="2" fill="#4c4c4c"/>
<rect x="560" y="406" width="2" height="2" fill="#4c4c4c"/>
<rect x="560" y="420" width="2" height="2" fill="#4c4c4c"/>
<rect x="560" y="434" width="2" height="2" fill="#4c4c4c"/>
<rect x="560" y="449" width="2" height="2" fill="#4c4c4c"/>
<rect x="560" y="463" width="2" height="2" fill="#4c4c4c"/>
<rect x="575" y="92" width="2" height="2" fill="#4c4c4c"/>
<rect x="575" y="106" width="2" height="2" fill="#4c4c4c"/>
<rect x="575" y="120" width="2" height="2" fill="#4c4c4c"/>
<rect x="575" y="135" width="2" height="2" fill="#4c4c4c"/>
<rect x="575" y="149" width="2" height="2" fill="#4c4c4c"/>
<rect x="575" y="163" width="2" height="2" fill="#4c4c4c"/>
<rect x="575" y="177" width="2" height="2" fill="#4c4c4c"/>
<rect x="575" y="192" width="2" height="2" fill="#4c4c4c"/>
<rect x="575" y="206" width="2" height="2" fill="#4c4c4c"/>
<rect x="575" y="220" width="2" height="2" fill="#4c4c4c"/>
<rect x="575" y="234" width="2" height="2" fill="#4c4c4c"/>
<rect x="575" y="249" width="2" height="2" fill="#4c4c4c"/>
<rect x="575" y="263" width="2" height="2" fill="#4c4c4c"/>
<rect x="575" y="277" width="2" height="2" fill="#4c4c4c"/>
<rect x="575" y="292" width="2" height="2" fill="#4c4c4c"/>
<rect x="575" y="306" width="2" height="2" fill="#4c4c4c"/>
<rect x="575" y="320" width="2" height="2" fill="#4c4c4c"/>
<rect x="575" y="334" width="2" height="2" fill="#4c4c4c"/>
<rect x="575" y="349" width="2" height="2" fill="#4c4c4c"/>
<rect x="575" y="363" width="2" height="2" fill="#4c4c4c"/>
<rect x="575" y="377" width="2" height="2" fill="#4c4c4c"/>
<rect x="575" y="392" width="2" height="2" fill="#4c4c4c"/>
<rect x="575" y="406" width="2" height="2" fill="#4c4c4c"/>
<rect x="575" y="420" width="2" height="2" fill="#4c4c4c"/>
<rect x="575" y="434" width="2" height="2" fill="#4c4c4c"/>
<rect x="575" y="449" width="2" height="2" fill="#4c4c4c"/>
<rect x="575" y="463" width="2" height="2" fill="#4c4c4c"/>
<rect x="589" y="92" width="2" height="2" fill="#4c4c4c"/>
<rect x="589" y="106" width="2" height="2" fill="#4c4c4c"/>
<rect x="589" y="120" width="2" height="2" fill="#4c4c4c"/>
<rect x="589" y="135" width="2" height="2" fill="#4c4c4c"/>
<rect x="589" y="149" width="2" height="2" fill="#4c4c4c"/>
<rect x="589" y="163" width="2" height="2" fill="#4c4c4c"/>
<rect x="589" y="177" width="2" height="2" fill="#4c4c4c"/>
<rect x="589" y="192" width="2" height="2" fill="#4c4c4c"/>
<rect x="589" y="206" width="2" height="2" fill="#4c4c4c"/>
<rect x="589" y="220" width="2" height="2" fill="#4c4c4c"/>
<rect x="589" y="234" width="2" height="2" fill="#4c4c4c"/>
<rect x="589" y="249" width="2" height="2" fill="#4c4c4c"/>
<rect x="589" y="263" width="2" height="2" fill="#4c4c4c"/>
<rect x="589" y="277" width="2" height="2" fill="#4c4c4c"/>
<rect x="589" y="292" width="2" height="2" fill="#4c4c4c"/>
<rect x="589" y="306" width="2" height="2" fill="#4c4c4c"/>
<rect x="589" y="320" width="2" height="2" fill="#4c4c4c"/>
<rect x="589" y="334" width="2" height="2" fill="#4c4c4c"/>
<rect x="589" y="349" width="2" height="2" fill="#4c4c4c"/>
<rect x="589" y="363" width="2" height="2" fill="#4c4c4c"/>
<rect x="589" y="377" width="2" height="2" fill="#4c4c4c"/>
<rect x="589" y="392" width="2" height="2" fill="#4c4c4c"/>
<rect x="589" y="406" width="2" height="2" fill="#4c4c4c"/>
<rect x="589" y="420" width="2" height="2" fill="#4c4c4c"/>
<rect x="589" y="434" width="2" height="2" fill="#4c4c4c"/>
<rect x="589" y="449" width="2" height="2" fill="#4c4c4c"/>
<rect x="589" y="463" width="2" height="2" fill="#4c4c4c"/>
<rect x="603" y="92" width="2" height="2" fill="#4c4c4c"/>
<rect x="603" y="106" width="2" height="2" fill="#4c4c4c"/>
<rect x="603" y="120" width="2" height="2" fill="#4c4c4c"/>
<rect x="603" y="135" width="2" height="2" fill="#4c4c4c"/>
<rect x="603" y="149" width="2" height="2" fill="#4c4c4c"/>
<rect x="603" y="163" width="2" height="2" fill="#4c4c4c"/>
<rect x="603" y="177" width="2" height="2" fill="#4c4c4c"/>
<rect x="603" y="192" width="2" height="2" fill="#4c4c4c"/>
<rect x="603" y="206" width="2" height="2" fill="#4c4c4c"/>
<rect x="603" y="220" width="2" height="2" fill="#4c4c4c"/>
<rect x="603" y="234" width="2" height="2" fill="#4c4c4c"/>
<rect x="603" y="249" width="2" height="2" fill="#4c4c4c"/>
<rect x="603" y="263" width="2" height="2" fill="#4c4c4c"/>
<rect x="603" y="277" width="2" height="2" fill="#4c4c4c"/>
<rect x="603" y="292" width="2" height="2" fill="#4c4c4c"/>
<rect x="603" y="306" width="2" height="2" fill="#4c4c4c"/>
<rect x="603" y="320" width="2" height="2" fill="#4c4c4c"/>
<rect x="603" y="334" width="2" height="2" fill="#4c4c4c"/>
<rect x="603" y="349" width="2" height="2" fill="#4c4c4c"/>
<rect x="603" y="363" width="2" height="2" fill="#4c4c4c"/>
<rect x="603" y="377" width="2" height="2" fill="#4c4c4c"/>
<rect x="603" y="392" width="2" height="2" fill="#4c4c4c"/>
<rect x="603" y="406" width="2" height="2" fill="#4c4c4c"/>
<rect x="603" y="420" width="2" height="2" fill="#4c4c4c"/>
<rect x="603" y="434" width="2" height="2" fill="#4c4c4c"/>
<rect x="603" y="449" width="2" height="2" fill="#4c4c4c"/>
<rect x="603" y="463" width="2" height="2" fill="#4c4c4c"/>
<rect x="617" y="92" width="2" height="2" fill="#4c4c4c"/>
<rect x="617" y="106" width="2" height="2" fill="#4c4c4c"/>
<rect x="617" y="120" width="2" height="2" fill="#4c4c4c"/>
<rect x="617" y="135" width="2" height="2" fill="#4c4c4c"/>
<rect x="617" y="149" width="2" height="2" fill="#4c4c4c"/>
<rect x="617" y="163" width="2" height="2" fill="#4c4c4c"/>
<rect x="617" y="177" width="2" height="2" fill="#4c4c4c"/>
<rect x="617" y="192" width="2" height="2" fill="#4c4c4c"/>
<rect x="617" y="206" width="2" height="2" fill="#4c4c4c"/>
<rect x="617" y="220" width="2" height="2" fill="#4c4c4c"/>
<rect x="617" y="234" width="2" height="2" fill="#4c4c4c"/>
<rect x="617" y="249" width="2" height="2" fill="#4c4c4c"/>
<rect x="617" y="263" width="2" height="2" fill="#4c4c4c"/>
<rect x="617" y="277" width="2" height="2" fill="#4c4c4c"/>
<rect x="617" y="292" width="2" height="2" fill="#4c4c4c"/>
<rect x="617" y="306" width="2" height="2" fill="#4c4c4c"/>
<rect x="617" y="320" width="2" height="2" fill="#4c4c4c"/>
<rect x="617" y="334" width="2" height="2" fill="#4c4c4c"/>
<rect x="617" y="349" width="2" height="2" fill="#4c4c4c"/>
<rect x="617" y="363" width="2" height="2" fill="#4c4c4c"/>
<rect x="617" y="377" width="2" height="2" fill="#4c4c4c"/>
<rect x="617" y="392" width="2" height="2" fill="#4c4c4c"/>
<rect x="617" y="406" width="2" height="2" fill="#4c4c4c"/>
<rect x="617" y="420" width="2" height="2" fill="#4c4c4c"/>
<rect x="617" y="434" width="2" height="2" fill="#4c4c4c"/>
<rect x="617" y="449" width="2" height="2" fill="#4c4c4c"/>
<rect x="617" y="463" width="2" height="2" fill="#4c4c4c"/>
<rect x="632" y="92" width="2" height="2" fill="#4c4c4c"/>
<rect x="632" y="106" width="2" height="2" fill="#4c4c4c"/>
<rect x="632" y="120" width="2" height="2" fill="#4c4c4c"/>
<rect x="632" y="135" width="2" height="2" fill="#4c4c4c"/>
<rect x="632" y="149" width="2" height="2" fill="#4c4c4c"/>
<rect x="632" y="163" width="2" height="2" fill="#4c4c4c"/>
<rect x="632" y="177" width="2" height="2" fill="#4c4c4c"/>
<rect x="632" y="192" width="2" height="2" fill="#4c4c4c"/>
<rect x="632" y="206" width="2" height="2" fill="#4c4c4c"/>
<rect x="632" y="220" width="2" height="2" fill="#4c4c4c"/>
<rect x="632" y="234" width="2" height="2" fill="#4c4c4c"/>
<rect x="632" y="249" width="2" height="2" fill="#4c4c4c"/>
<rect x="632" y="263" width="2" height="2" fill="#4c4c4c"/>
<rect x="632" y="277" width="2" height="2" fill="#4c4c4c"/>
<rect x="632" y="292" width="2" height="2" fill="#4c4c4c"/>
<rect x="632" y="306" width="2" height="2" fill="#4c4c4c"/>
<rect x="632" y="320" width="2" height="2" fill="#4c4c4c"/>
<rect x="632" y="334" width="2" height="2" fill="#4c4c4c"/>
<rect x="632" y="349" width="2" height="2" fill="#4c4c4c"/>
<rect x="632" y="363" width="2" height="2" fill="#4c4c4c"/>
<rect x="632" y="377" width="2" height="2" fill="#4c4c4c"/>
<rect x="632" y="392" width="2" height="2" fill="#4c4c4c"/>
<rect x="632" y="406" width="2" height="2" fill="#4c4c4c"/>
<rect x="632" y="420" width="2" height="2" fill="#4c4c4c"/>
<rect x="632" y="434" width="2" height="2" fill="#4c4c4c"/>
<rect x="632" y="449" width="2" height="2" fill="#4c4c4c"/>
<rect x="632" y="463" width="2" height="2" fill="#4c4c4c"/>
<rect x="646" y="92" width="2" height="2" fill="#4c4c4c"/>
<rect x="646" y="106" width="2" height="2" fill="#4c4c4c"/>
<rect x="646" y="120" width="2" height="2" fill="#4c4c4c"/>
<rect x="646" y="135" width="2" height="2" fill="#4c4c4c"/>
<rect x="646" y="149" width="2" height="2" fill="#4c4c4c"/>
<rect x="646" y="163" width="2" height="2" fill="#4c4c4c"/>
<rect x="646" y="177" width="2" height="2" fill="#4c4c4c"/>
<rect x="646" y="192" width="2" height="2" fill="#4c4c4c"/>
<rect x="646" y="206" width="2" height="2" fill="#4c4c4c"/>
<rect x="646" y="220" width="2" height="2" fill="#4c4c4c"/>
<rect x="646" y="234" width="2" height="2" fill="#4c4c4c"/>
<rect x="646" y="249" width="2" height="2" fill="#4c4c4c"/>
<rect x="646" y="263" width="2" height="2" fill="#4c4c4c"/>
<rect x="646" y="277" width="2" height="2" fill="#4c4c4c"/>
<rect x="646" y="292" width="2" height="2" fill="#4c4c4c"/>
<rect x="646" y="306" width="2" height="2" fill="#4c4c4c"/>
<rect x="646" y="320" width="2" height="2" fill="#4c4c4c"/>
<rect x="646" y="334" width="2" height="2" fill="#4c4c4c"/>
<rect x="646" y="349" width="2" height="2" fill="#4c4c4c"/>
<rect x="646" y="363" width="2" height="2" fill="#4c4c4c"/>
<rect x="646" y="377" width="2" height="2" fill="#4c4c4c"/>
<rect x="646" y="392" width="2" height="2" fill="#4c4c4c"/>
<rect x="646" y="406" width="2" height="2" fill="#4c4c4c"/>
<rect x="646" y="420" width="2" height="2" fill="#4c4c4c"/>
<rect x="646" y="434" width="2" height="2" fill="#4c4c4c"/>
<rect x="646" y="449" width="2" height="2" fill="#4c4c4c"/>
<rect x="646" y="463" width="2" height="2" fill="#4c4c4c"/>
<rect x="660" y="92" width="2" height="2" fill="#4c4c4c"/>
<rect x="660" y="106" width="2" height="2" fill="#4c4c4c"/>
<rect x="660" y="120" width="2" height="2" fill="#4c4c4c"/>
<rect x="660" y="135" width="2" height="2" fill="#4c4c4c"/>
<rect x="660" y="149" width="2" height="2" fill="#4c4c4c"/>
<rect x="660" y="163" width="2" height="2" fill="#4c4c4c"/>
<rect x="660" y="177" width="2" height="2" fill="#4c4c4c"/>
<rect x="660" y="192" width="2" height="2" fill="#4c4c4c"/>
<rect x="660" y="206" width="2" height="2" fill="#4c4c4c"/>
<rect x="660" y="220" width="2" height="2" fill="#4c4c4c"/>
<rect x="660" y="234" width="2" height="2" fill="#4c4c4c"/>
<rect x="660" y="249" width="2" height="2" fill="#4c4c4c"/>
<rect x="660" y="263" width="2" height="2" fill="#4c4c4c"/>
<rect x="660" y="277" width="2" height="2" fill="#4c4c4c"/>
<rect x="660" y="292" width="2" height="2" fill="#4c4c4c"/>
<rect x="660" y="306" width="2" height="2" fill="#4c4c4c"/>
<rect x="660" y="320" width="2" height="2" fill="#4c4c4c"/>
<rect x="660" y="334" width="2" height="2" fill="#4c4c4c"/>
<rect x="660" y="349" width="2" height="2" fill="#4c4c4c"/>
<rect x="660" y="363" width="2" height="2" fill="#4c4c4c"/>
<rect x="660" y="377" width="2" height="2" fill="#4c4c4c"/>
<rect x="660" y="392" width="2" height="2" fill="#4c4c4c"/>
<rect x="660" y="406" width="2" height="2" fill="#4c4c4c"/>
<rect x="660" y="420" width="2" height="2" fill="#4c4c4c"/>
<rect x="660" y="434" width="2" height="2" fill="#4c4c4c"/>
<rect x="660" y="449" width="2" height="2" fill="#4c4c4c"/>
<rect x="660" y="463" width="2" height="2" fill="#4c4c4c"/>
<rect x="674" y="92" width="2" height="2" fill="#4c4c4c"/>
<rect x="674" y="106" width="2" height="2" fill="#4c4c4c"/>
<rect x="674" y="120" width="2" height="2" fill="#4c4c4c"/>
<rect x="674" y="135" width="2" height="2" fill="#4c4c4c"/>
<rect x="674" y="149" width="2" height="2" fill="#4c4c4c"/>
<rect x="674" y="163" width="2" height="2" fill="#4c4c4c"/>
<rect x="674" y="177" width="2" height="2" fill="#4c4c4c"/>
<rect x="674" y="192" width="2" height="2" fill="#4c4c4c"/>
<rect x="674" y="206" width="2" height="2" fill="#4c4c4c"/>
<rect x="674" y="220" width="2" height="2" fill="#4c4c4c"/>
<rect x="674" y="234" width="2" height="2" fill="#4c4c4c"/>
<rect x="674" y="249" width="2" height="2" fill="#4c4c4c"/>
<rect x="674" y="263" width="2" height="2" fill="#4c4c4c"/>
<rect x="674" y="277" width="2" height="2" fill="#4c4c4c"/>
<rect x="674" y="292" width="2" height="2" fill="#4c4c4c"/>
<rect x="674" y="306" width="2" height="2" fill="#4c4c4c"/>
<rect x="674" y="320" width="2" height="2" fill="#4c4c4c"/>
<rect x="674" y="334" width="2" height="2" fill="#4c4c4c"/>
<rect x="674" y="349" width="2" height="2" fill="#4c4c4c"/>
<rect x="674" y="363" width="2" height="2" fill="#4c4c4c"/>
<rect x="674" y="377" width="2" height="2" fill="#4c4c4c"/>
<rect x="674" y="392" width="2" height="2" fill="#4c4c4c"/>
<rect x="674" y="406" width="2" height="2" fill="#4c4c4c"/>
<rect x="674" y="420" width="2" height="2" fill="#4c4c4c"/>
<rect x="674" y="434" width="2" height="2" fill="#4c4c4c"/>
<rect x="674" y="449" width="2" height="2" fill="#4c4c4c"/>
<rect x="674" y="463" width="2" height="2" fill="#4c4c4c"/>
<rect x="689" y="92" width="2" height="2" fill="#4c4c4c"/>
<rect x="689" y="106" width="2" height="2" fill="#4c4c4c"/>
<rect x="689" y="120" width="2" height="2" fill="#4c4c4c"/>
<rect x="689" y="135" width="2" height="2" fill="#4c4c4c"/>
<rect x="689" y="149" width="2" height="2" fill="#4c4c4c"/>
<rect x="689" y="163" width="2" height="2" fill="#4c4c4c"/>
<rect x="689" y="177" width="2" height="2" fill="#4c4c4c"/>
<rect x="689" y="192" width="2" height="2" fill="#4c4c4c"/>
<rect x="689" y="206" width="2" height="2" fill="#4c4c4c"/>
<rect x="689" y="220" width="2" height="2" fill="#4c4c4c"/>
<rect x="689" y="234" width="2" height="2" fill="#4c4c4c"/>
<rect x="689" y="249" width="2" height="2" fill="#4c4c4c"/>
<rect x="689" y="263" width="2" height="2" fill="#4c4c4c"/>
<rect x="689" y="277" width="2" height="2" fill="#4c4c4c"/>
<rect x="689" y="292" width="2" height="2" fill="#4c4c4c"/>
<rect x="689" y="306" width="2" height="2" fill="#4c4c4c"/>
<rect x="689" y="320" width="2" height="2" fill="#4c4c4c"/>
<rect x="689" y="334" width="2" height="2" fill="#4c4c4c"/>
<rect x="689" y="349" width="2" height="2" fill="#4c4c4c"/>
<rect x="689" y="363" width="2" height="2" fill="#4c4c4c"/>
<rect x="689" y="377" width="2" height="2" fill="#4c4c4c"/>
<rect x="689" y="392" width="2" height="2" fill="#4c4c4c"/>
<rect x="689" y="406" width="2" height="2" fill="#4c4c4c"/>
<rect x="689" y="420" width="2" height="2" fill="#4c4c4c"/>
<rect x="689" y="434" width="2" height="2" fill="#4c4c4c"/>
<rect x="689" y="449" width="2" height="2" fill="#4c4c4c"/>
<rect x="689" y="463" width="2" height="2" fill="#4c4c4c"/>
<rect x="703" y="92" width="2" height="2" fill="#4c4c4c"/>
<rect x="703" y="106" width="2" height="2" fill="#4c4c4c"/>
<rect x="703" y="120" width="2" height="2" fill="#4c4c4c"/>
<rect x="703" y="135" width="2" height="2" fill="#4c4c4c"/>
<rect x="703" y="149" width="2" height="2" fill="#4c4c4c"/>
<rect x="703" y="163" width="2" height="2" fill="#4c4c4c"/>
<rect x="703" y="177" width="2" height="2" fill="#4c4c4c"/>
<rect x="703" y="192" width="2" height="2" fill="#4c4c4c"/>
<rect x="703" y="206" width="2" height="2" fill="#4c4c4c"/>
<rect x="703" y="220" width="2" height="2" fill="#4c4c4c"/>
<rect x="703" y="234" width="2" height="2" fill="#4c4c4c"/>
<rect x="703" y="249" width="2" height="2" fill="#4c4c4c"/>
<rect x="703" y="263" width="2" height="2" fill="#4c4c4c"/>
<rect x="703" y="277" width="2" height="2" fill="#4c4c4c"/>
<rect x="703" y="292" width="2" height="2" fill="#4c4c4c"/>
<rect x="703" y="306" width="2" height="2" fill="#4c4c4c"/>
<rect x="703" y="320" width="2" height="2" fill="#4c4c4c"/>
<rect x="703" y="334" width="2" height="2" fill="#4c4c4c"/>
<rect x="703" y="349" width="2" height="2" fill="#4c4c4c"/>
<rect x="703" y="363" width="2" height="2" fill="#4c4c4c"/>
<rect x="703" y="377" width="2" height="2" fill="#4c4c4c"/>
<rect x="703" y="392" width="2" height="2" fill="#4c4c4c"/>
<rect x="703" y="406" width="2" height="2" fill="#4c4c4c"/>
<rect x="703" y="420" width="2" height="2" fill="#4c4c4c"/>
<rect x="703" y="434" width="2" height="2" fill="#4c4c4c"/>
<rect x="703" y="449" width="2" height="2" fill="#4c4c4c"/>
<rect x="703" y="463" width="2" height="2" fill="#4c4c4c"/>
<rect x="717" y="92" width="2" height="2" fill="#4c4c4c"/>
<rect x="717" y="106" width="2" height="2" fill="#4c4c4c"/>
<rect x="717" y="120" width="2" height="2" fill="#4c4c4c"/>
<rect x="717" y="135" width="2" height="2" fill="#4c4c4c"/>
<rect x="717" y="149" width="2" height="2" fill="#4c4c4c"/>
<rect x="717" y="163" width="2" height="2" fill="#4c4c4c"/>
<rect x="717" y="177" width="2" height="2" fill="#4c4c4c"/>
<rect x="717" y="192" width="2" height="2" fill="#4c4c4c"/>
<rect x="717" y="206" width="2" height="2" fill="#4c4c4c"/>
<rect x="717" y="220" width="2" height="2" fill="#4c4c4c"/>
<rect x="717" y="234" width="2" height="2" fill="#4c4c4c"/>
<rect x="717" y="249" width="2" height="2" fill="#4c4c4c"/>
<rect x="717" y="263" width="2" height="2" fill="#4c4c4c"/>
<rect x="717" y="277" width="2" height="2" fill="#4c4c4c"/>
<rect x="717" y="292" width="2" height="2" fill="#4c4c4c"/>
<rect x="717" y="306" width="2" height="2" fill="#4c4c4c"/>
<rect x="717" y="320" width="2" height="2" fill="#4c4c4c"/>
<rect x="717" y="334" width="2" height="2" fill="#4c4c4c"/>
<rect x="717" y="349" width="2" height="2" fill="#4c4c4c"/>
<rect x="717" y="363" width="2" height="2" fill="#4c4c4c"/>
<rect x="717" y="377" width="2" height="2" fill="#4c4c4c"/>
<rect x="717" y="392" width="2" height="2" fill="#4c4c4c"/>
<rect x="717" y="406" width="2" height="2" fill="#4c4c4c"/>
<rect x="717" y="420" width="2" height="2" fill="#4c4c4c"/>
<rect x="717" y="434" width="2" height="2" fill="#4c4c4c"/>
<rect x="717" y="449" width="2" height="2" fill="#4c4c4c"/>
<rect x="717" y="463" width="2" height="2" fill="#4c4c4c"/>
<rect x="732" y="92" width="2" height="2" fill="#4c4c4c"/>
<rect x="732" y="106" width="2" height="2" fill="#4c4c4c"/>
<rect x="732" y="120" width="2" height="2" fill="#4c4c4c"/>
<rect x="732" y="135" width="2" height="2" fill="#4c4c4c"/>
<rect x="732" y="149" width="2" height="2" fill="#4c4c4c"/>
<rect x="732" y="163" width="2" height="2" fill="#4c4c4c"/>
<rect x="732" y="177" width="2" height="2" fill="#4c4c4c"/>
<rect x="732" y="192" width="2" height="2" fill="#4c4c4c"/>
<rect x="732" y="206" width="2" height="2" fill="#4c4c4c"/>
<rect x="732" y="220" width="2" height="2" fill="#4c4c4c"/>
<rect x="732" y="234" width="2" height="2" fill="#4c4c4c"/>
<rect x="732" y="249" width="2" height="2" fill="#4c4c4c"/>
<rect x="732" y="263" width="2" height="2" fill="#4c4c4c"/>
<rect x="732" y="277" width="2" height="2" fill="#4c4c4c"/>
<rect x="732" y="292" width="2" height="2" fill="#4c4c4c"/>
<rect x="732" y="306" width="2" height="2" fill="#4c4c4c"/>
<rect x="732" y="320" width="2" height="2" fill="#4c4c4c"/>
<rect x="732" y="334" width="2" height="2" fill="#4c4c4c"/>
<rect x="732" y="349" width="2" height="2" fill="#4c4c4c"/>
<rect x="732" y="363" width="2" height="2" fill="#4c4c4c"/>
<rect x="732" y="377" width="2" height="2" fill="#4c4c4c"/>
<rect x="732" y="392" width="2" height="2" fill="#4c4c4c"/>
<rect x="732" y="406" width="2" height="2" fill="#4c4c4c"/>
<rect x="732" y="420" width="2" height="2" fill="#4c4c4c"/>
<rect x="732" y="434" width="2" height="2" fill="#4c4c4c"/>
<rect x="732" y="449" width="2" height="2" fill="#4c4c4c"/>
<rect x="732" y="463" width="2" height="2" fill="#4c4c4c"/>
<rect x="746" y="92" width="2" height="2" fill="#4c4c4c"/>
<rect x="746" y="106" width="2" height="2" fill="#4c4c4c"/>
<rect x="746" y="120" width="2" height="2" fill="#4c4c4c"/>
<rect x="746" y="135" width="2" height="2" fill="#4c4c4c"/>
<rect x="746" y="149" width="2" height="2" fill="#4c4c4c"/>
<rect x="746" y="163" width="2" height="2" fill="#4c4c4c"/>
<rect x="746" y="177" width="2" height="2" fill="#4c4c4c"/>
<rect x="746" y="192" width="2" height="2" fill="#4c4c4c"/>
<rect x="746" y="206" width="2" height="2" fill="#4c4c4c"/>
<rect x="746" y="220" width="2" height="2" fill="#4c4c4c"/>
<rect x="746" y="234" width="2" height="2" fill="#4c4c4c"/>
<rect x="746" y="249" width="2" height="2" fill="#4c4c4c"/>
<rect x="746" y="263" width="2" height="2" fill="#4c4c4c"/>
<rect x="746" y="277" width="2" height="2" fill="#4c4c4c"/>
<rect x="746" y="292" width="2" height="2" fill="#4c4c4c"/>
<rect x="746" y="306" width="2" height="2" fill="#4c4c4c"/>
<rect x="746" y="320" width="2" height="2" fill="#4c4c4c"/>
<rect x="746" y="334" width="2" height="2" fill="#4c4c4c"/>
<rect x="746" y="349" width="2" height="2" fill="#4c4c4c"/>
<rect x="746" y="363" width="2" height="2" fill="#4c4c4c"/>
<rect x="746" y="377" width="2" height="2" fill="#4c4c4c"/>
<rect x="746" y="392" width="2" height="2" fill="#4c4c4c"/>
<rect x="746" y="406" width="2" height="2" fill="#4c4c4c"/>
<rect x="746" y="420" width="2" height="2" fill="#4c4c4c"/>
<rect x="746" y="434" width="2" height="2" fill="#4c4c4c"/>
<rect x="746" y="449" width="2" height="2" fill="#4c4c4c"/>
<rect x="746" y="463" width="2" height="2" fill="#4c4c4c"/>
<pattern id="sd0" x="209" y="0" width="11" height="11" patternUnits="userSpaceOnUse"><rect x="0" y="0" width="11" height="11" fill="#000" fill-opacity="0.35"/><rect x="9" y="5" width="2" height="2" fill="#a8a8a8"/><rect x="3" y="0" width="1" height="1" fill="#6c6c6c"/><rect x="1" y="2" width="1" height="1" fill="#3a3a48"/><rect x="6" y="8" width="1" height="1" fill="#4a4a4a"/><rect x="0" y="9" width="1" height="1" fill="#3a3a48"/><rect x="4" y="4" width="1" height="1" fill="#505050"/></pattern>
<rect x="209" y="146.5" width="40" height="323.5" fill="url(#sd0)" />
<pattern id="sd1" x="320" y="0" width="11" height="11" patternUnits="userSpaceOnUse"><rect x="0" y="0" width="11" height="11" fill="#000" fill-opacity="0.35"/><rect x="7" y="5" width="2" height="2" fill="#a8a8a8"/><rect x="1" y="0" width="1" height="1" fill="#6c6c6c"/><rect x="10" y="2" width="1" height="1" fill="#3a3a48"/><rect x="4" y="8" width="1" height="1" fill="#4a4a4a"/><rect x="9" y="9" width="1" height="1" fill="#3a3a48"/><rect x="2" y="4" width="1" height="1" fill="#505050"/></pattern>
<rect x="320.5" y="70" width="40.0" height="215.5" fill="url(#sd1)" />
<pattern id="sd2" x="401" y="0" width="11" height="11" patternUnits="userSpaceOnUse"><rect x="0" y="0" width="11" height="11" fill="#000" fill-opacity="0.35"/><rect x="3" y="5" width="2" height="2" fill="#a8a8a8"/><rect x="8" y="0" width="1" height="1" fill="#6c6c6c"/><rect x="6" y="2" width="1" height="1" fill="#3a3a48"/><rect x="0" y="8" width="1" height="1" fill="#4a4a4a"/><rect x="5" y="9" width="1" height="1" fill="#3a3a48"/><rect x="9" y="4" width="1" height="1" fill="#505050"/></pattern>
<rect x="401" y="229" width="39.5" height="241" fill="url(#sd2)" />
<pattern id="sd3" x="560" y="0" width="11" height="11" patternUnits="userSpaceOnUse"><rect x="0" y="0" width="11" height="11" fill="#000" fill-opacity="0.35"/><rect x="8" y="5" width="2" height="2" fill="#a8a8a8"/><rect x="2" y="0" width="1" height="1" fill="#6c6c6c"/><rect x="0" y="2" width="1" height="1" fill="#3a3a48"/><rect x="5" y="8" width="1" height="1" fill="#4a4a4a"/><rect x="10" y="9" width="1" height="1" fill="#3a3a48"/><rect x="3" y="4" width="1" height="1" fill="#505050"/></pattern>
<rect x="560.5" y="132.5" width="41.0" height="337.5" fill="url(#sd3)" />
<rect x="321" y="229.5" width="40" height="39" fill="url(#hatch)" />
<rect x="561" y="149.5" width="40" height="39" fill="url(#hatch)" />
<line x1="87" y1="88.5" x2="747" y2="88.5" stroke="#2c8060" stroke-width="1"/>
<line x1="87" y1="109.5" x2="747" y2="109.5" stroke="#2c8060" stroke-width="1"/>
<line x1="87" y1="149.5" x2="747" y2="149.5" stroke="#2c8060" stroke-width="1"/>
<line x1="87" y1="169.5" x2="747" y2="169.5" stroke="#2c8060" stroke-width="1"/>
<line x1="87" y1="188.5" x2="747" y2="188.5" stroke="#2c8060" stroke-width="1"/>
<line x1="87" y1="229.5" x2="747" y2="229.5" stroke="#2c8060" stroke-width="1"/>
<line x1="87" y1="248.5" x2="747" y2="248.5" stroke="#2c8060" stroke-width="1"/>
<line x1="87" y1="268.5" x2="747" y2="268.5" stroke="#2c8060" stroke-width="1"/>
<line x1="87" y1="309.5" x2="747" y2="309.5" stroke="#2c8060" stroke-width="1"/>
<line x1="87" y1="349.5" x2="747" y2="349.5" stroke="#2c8060" stroke-width="1"/>
<line x1="304" y1="229" x2="304" y2="269" stroke="#2c8060"/>
<line x1="544" y1="149.5" x2="544" y2="189" stroke="#2c8060"/>
<line x1="619" y1="149.5" x2="619" y2="189" stroke="#2c8060"/>
<rect x="209" y="146.5" width="40" height="323.5" fill="none" stroke="#8c9464" stroke-width="1"/>
<rect x="320.5" y="70" width="40.0" height="215.5" fill="none" stroke="#8c9464" stroke-width="1"/>
<rect x="401" y="229" width="39.5" height="241" fill="none" stroke="#8c9464" stroke-width="1"/>
<rect x="560.5" y="132.5" width="41.0" height="337.5" fill="none" stroke="#8c9464" stroke-width="1"/>
<line x1="229" y1="146.5" x2="229" y2="470" stroke="#8c9464"/>
<line x1="340.5" y1="70" x2="340.5" y2="229" stroke="#8c9464"/>
<line x1="320.5" y1="212" x2="360.5" y2="212" stroke="#8c9464"/>
<line x1="420.5" y1="229" x2="420.5" y2="470" stroke="#8c9464"/>
<line x1="401" y1="248.5" x2="440.5" y2="248.5" stroke="#8c9464"/>
<line x1="580.5" y1="189" x2="580.5" y2="470" stroke="#8c9464"/>
<line x1="560.5" y1="206" x2="601.5" y2="206" stroke="#8c9464"/>
<line x1="320" y1="189" x2="476" y2="189" stroke="#e01818" stroke-width="2"/>
<line x1="320" y1="308.5" x2="476" y2="308.5" stroke="#e01818" stroke-width="2"/>
<line x1="475" y1="189" x2="475" y2="308.5" stroke="#e01818" stroke-width="2"/>
<line x1="319.5" y1="189" x2="319.5" y2="308.5" stroke="#b01818" stroke-width="1.5"/>
<line x1="320.5" y1="229" x2="475" y2="229" stroke="#e01818" stroke-width="2"/>
<line x1="320.5" y1="268.5" x2="475" y2="268.5" stroke="#e01818" stroke-width="2"/>
<line x1="360.5" y1="229" x2="360.5" y2="268.5" stroke="#b81818" stroke-width="1.5"/>
<line x1="377" y1="229" x2="377" y2="268.5" stroke="#e01818" stroke-width="1.6"/>
<line x1="417.5" y1="229" x2="417.5" y2="268.5" stroke="#e01818" stroke-width="2"/>
<line x1="87" y1="329.5" x2="747" y2="329.5" stroke="#8030d0" stroke-width="1.4"/>
<line x1="621" y1="329.5" x2="621" y2="470" stroke="#4c2290" stroke-width="1.2"/>
</g>
<g fill="none" stroke="#3cd0d0" stroke-width="1.6" shape-rendering="geometricPrecision" clip-path="url(#cc)">
<path d="M590,304 L610,358 L630,304"/>
<path d="M641,303.5 L655,303.5 A23,27.5 0 0 1 655,358.5 L641,358.5 Z"/>
<path d="M693.5,303.5 L708,303.5 A23,27.5 0 0 1 708,358.5 L693.5,358.5 Z"/>
<path d="M657.5,329.5 h6 M660.5,326.5 v6" stroke="#c8d8d8" stroke-width="1"/>
<path d="M84,311 A10,20 0 0 1 84,349"/>
</g>
<path d="M411,210 L411,221 L413.5,218.5 L415.5,222.5 L417,221.8 L415,217.8 L418,217.5 Z" fill="#000" stroke="#ddd" stroke-width="0.8" shape-rendering="geometricPrecision"/>
</svg>
<!-- tooltip -->
<div class="a" style="left:422px;top:222px;width:143px;height:72px;background:#f2f000"></div>
<div class="t" style="left:423px;top:222px;font-size:8.8px;line-height:10.2px;color:#1a1a00">M3.line_end_violation<br>Space at Metalx in a dense-line-end<br>configuration: If Metalx has parallel<br>run length with opposite Metalx<br>along 2 adjacent edges of Metalx,<br>then one of the space needs to be<br>&gt;= 0.20</div>

<!-- left panel -->
<div class="a" style="left:2px;top:83px;width:83px;height:1px;background:#f0f0f0"></div>
<div class="a sunk" style="left:3px;top:87px;width:12px;height:11px;background:#d0d0d0"></div>
<div class="a sunk" style="left:17px;top:84px;width:8px;height:8px;background:#d0d0d0"></div>
<div class="a sunk" style="left:17px;top:93px;width:8px;height:8px;background:#d0d0d0"></div>
<div class="t" style="left:28.10px;top:85.17px;font-size:7.0px;line-height:7.82px;font-weight:bold;color:#222;">VisAll</div>
<div class="t" style="left:28.10px;top:94.17px;font-size:7.0px;line-height:7.82px;color:#8a8a8a;font-style:italic">SelAll</div>
<div class="a sunk" style="left:4px;top:106px;width:51px;height:13px;background:#a9a9a9;overflow:hidden"><div class="t" style="left:0.60px;top:1.02px;font-size:8.6px;line-height:9.61px;color:#111;">cks_which_m</div></div>
<div class="a raise" style="left:55px;top:106px;width:11px;height:13px;background:#d6d6d6"></div>
<svg class="a" style="left:57px;top:110px" width="7" height="5"><path d="M0,0 H6 L3,4 Z" fill="#111"/></svg>
<!-- scrollbar -->
<div class="a" style="left:75px;top:121px;width:9px;height:329px;background:#a8a8a8"></div>
<div class="a raise" style="left:75px;top:128px;width:9px;height:52px;background:#cfcfcf"></div>
<svg class="a" style="left:75px;top:121px" width="9" height="8"><path d="M4.5,0.5 L8.5,7.5 H0.5 Z" fill="#d8d8d8" stroke="#777" stroke-width="1"/></svg>
<svg class="a" style="left:75px;top:441px" width="9" height="9"><path d="M4.5,8 L8.5,1 H0.5 Z" fill="#d8d8d8" stroke="#777" stroke-width="1"/></svg>
<div class="cell" style="left:5px;top:124px;width:13px;height:12px;background:#b4b4b4"></div>
<div class="cell" style="left:19px;top:124px;width:16px;height:12px"></div>
<div class="t" style="left:21.00px;top:126.52px;font-size:7.6px;line-height:8.49px;color:#000;-webkit-text-stroke:0.25px #000">dg</div>
<div class="cell" style="left:35px;top:124px;width:36px;height:12px"></div>
<div class="a" style="left:37px;top:124px;width:33px;height:12px;overflow:hidden"><div class="t" style="left:0.00px;top:2.68px;font-size:7.2px;line-height:8.04px;color:#000;-webkit-text-stroke:0.25px #000">ref</div></div>
<div class="cell" style="left:5px;top:140px;width:13px;height:12px;background:#b8b8b8"></div>
<div class="cell" style="left:19px;top:140px;width:16px;height:12px"></div>
<div class="t" style="left:21.00px;top:142.52px;font-size:7.6px;line-height:8.49px;color:#000;-webkit-text-stroke:0.25px #000">dg</div>
<div class="cell" style="left:35px;top:140px;width:36px;height:12px"></div>
<div class="a" style="left:37px;top:140px;width:33px;height:12px;overflow:hidden"><div class="t" style="left:0.00px;top:2.68px;font-size:7.2px;line-height:8.04px;color:#000;-webkit-text-stroke:0.25px #000">DNW</div></div>
<div class="cell" style="left:5px;top:155px;width:13px;height:12px;background:#bababa"></div>
<div class="cell" style="left:19px;top:155px;width:16px;height:12px"></div>
<div class="t" style="left:21.00px;top:157.52px;font-size:7.6px;line-height:8.49px;color:#000;-webkit-text-stroke:0.25px #000">dg</div>
<div class="cell" style="left:35px;top:155px;width:36px;height:12px"></div>
<div class="a" style="left:37px;top:155px;width:33px;height:12px;overflow:hidden"><div class="t" style="left:0.00px;top:2.68px;font-size:7.2px;line-height:8.04px;color:#000;-webkit-text-stroke:0.25px #000">PW</div></div>
<div class="a" style="left:5px;top:171px;width:13px;height:12px;background:#b0b0b0;border:2px solid #f4f4e8;border-top-color:#f4f4e8;"></div>
<div class="cell" style="left:19px;top:171px;width:16px;height:12px"></div>
<div class="t" style="left:21.00px;top:173.52px;font-size:7.6px;line-height:8.49px;color:#000;-webkit-text-stroke:0.25px #000">dg</div>
<div class="cell" style="left:35px;top:171px;width:36px;height:12px"></div>
<div class="a" style="left:37px;top:171px;width:33px;height:12px;overflow:hidden"><div class="t" style="left:0.00px;top:2.68px;font-size:7.2px;line-height:8.04px;color:#000;-webkit-text-stroke:0.25px #000">NW</div></div>
<div class="a" style="left:5px;top:187px;width:13px;height:12px;border:1px solid #c02030;background:repeating-linear-gradient(45deg,#c02030 0 1.5px,#e06070 1.5px 3px)"></div>
<div class="cell" style="left:19px;top:187px;width:16px;height:12px"></div>
<div class="t" style="left:21.00px;top:189.52px;font-size:7.6px;line-height:8.49px;color:#000;-webkit-text-stroke:0.25px #000">dg</div>
<div class="cell" style="left:35px;top:187px;width:36px;height:12px"></div>
<div class="a" style="left:37px;top:187px;width:33px;height:12px;overflow:hidden"><div class="t" style="left:0.00px;top:2.68px;font-size:7.2px;line-height:8.04px;color:#000;-webkit-text-stroke:0.25px #000">OD</div></div>
<div class="a" style="left:5px;top:203px;width:13px;height:12px;background:#c0a0a4;border:2px solid #c03040;border-top-color:#c03040;"></div>
<div class="cell" style="left:19px;top:203px;width:16px;height:12px"></div>
<div class="t" style="left:21.00px;top:205.52px;font-size:7.6px;line-height:8.49px;color:#000;-webkit-text-stroke:0.25px #000">dg</div>
<div class="cell" style="left:35px;top:203px;width:36px;height:12px"></div>
<div class="a" style="left:37px;top:203px;width:33px;height:12px;overflow:hidden"><div class="t" style="left:0.00px;top:2.68px;font-size:7.2px;line-height:8.04px;color:#000;-webkit-text-stroke:0.25px #000">PDIFF</div></div>
<div class="cell" style="left:5px;top:218px;width:13px;height:12px;background:#c4a488"></div>
<div class="cell" style="left:19px;top:218px;width:16px;height:12px"></div>
<div class="t" style="left:21.00px;top:220.52px;font-size:7.6px;line-height:8.49px;color:#000;-webkit-text-stroke:0.25px #000">dg</div>
<div class="cell" style="left:35px;top:218px;width:36px;height:12px"></div>
<div class="a" style="left:37px;top:218px;width:33px;height:12px;overflow:hidden"><div class="t" style="left:0.00px;top:2.68px;font-size:7.2px;line-height:8.04px;color:#000;-webkit-text-stroke:0.25px #000">NDIFF</div></div>
<div class="a" style="left:5px;top:234px;width:13px;height:12px;border:1px solid #2828c0;background:repeating-linear-gradient(45deg,#2828c0 0 1.2px,transparent 1.2px 3px),repeating-linear-gradient(-45deg,#2828c0 0 1.2px,#9090f0 1.2px 3px)"></div>
<div class="cell" style="left:19px;top:234px;width:16px;height:12px"></div>
<div class="t" style="left:21.00px;top:236.52px;font-size:7.6px;line-height:8.49px;color:#000;-webkit-text-stroke:0.25px #000">dg</div>
<div class="cell" style="left:35px;top:234px;width:36px;height:12px"></div>
<div class="a" style="left:37px;top:234px;width:33px;height:12px;overflow:hidden"><div class="t" style="left:0.00px;top:2.68px;font-size:7.2px;line-height:8.04px;color:#000;-webkit-text-stroke:0.25px #000">OD_12</div></div>
<div class="cell" style="left:5px;top:250px;width:13px;height:12px;background:#bcbcbc"></div>
<div class="cell" style="left:19px;top:250px;width:16px;height:12px"></div>
<div class="t" style="left:21.00px;top:252.52px;font-size:7.6px;line-height:8.49px;color:#000;-webkit-text-stroke:0.25px #000">dg</div>
<div class="cell" style="left:35px;top:250px;width:36px;height:12px"></div>
<div class="a" style="left:37px;top:250px;width:33px;height:12px;overflow:hidden"><div class="t" style="left:0.00px;top:2.68px;font-size:7.2px;line-height:8.04px;color:#000;-webkit-text-stroke:0.25px #000">OD_18</div></div>
<div class="cell" style="left:5px;top:266px;width:13px;height:12px;background:#b0b0b0"></div>
<div class="cell" style="left:19px;top:266px;width:16px;height:12px"></div>
<div class="t" style="left:21.00px;top:268.52px;font-size:7.6px;line-height:8.49px;color:#000;-webkit-text-stroke:0.25px #000">dg</div>
<div class="cell" style="left:35px;top:266px;width:36px;height:12px"></div>
<div class="a" style="left:37px;top:266px;width:33px;height:12px;overflow:hidden"><div class="t" style="left:0.00px;top:2.68px;font-size:7.2px;line-height:8.04px;color:#000;-webkit-text-stroke:0.25px #000">OD_25</div></div>
<div class="cell" style="left:5px;top:282px;width:13px;height:12px;background:#bcbcbc"></div>
<div class="cell" style="left:19px;top:282px;width:16px;height:12px"></div>
<div class="t" style="left:21.00px;top:284.52px;font-size:7.6px;line-height:8.49px;color:#000;-webkit-text-stroke:0.25px #000">dg</div>
<div class="cell" style="left:35px;top:282px;width:36px;height:12px"></div>
<div class="a" style="left:37px;top:282px;width:33px;height:12px;overflow:hidden"><div class="t" style="left:0.00px;top:2.68px;font-size:7.2px;line-height:8.04px;color:#000;-webkit-text-stroke:0.25px #000">OD_33</div></div>
<div class="cell" style="left:5px;top:297px;width:13px;height:12px;background:#bcbcbc"></div>
<div class="cell" style="left:19px;top:297px;width:16px;height:12px"></div>
<div class="t" style="left:21.00px;top:299.52px;font-size:7.6px;line-height:8.49px;color:#000;-webkit-text-stroke:0.25px #000">dg</div>
<div class="cell" style="left:35px;top:297px;width:36px;height:12px"></div>
<div class="a" style="left:37px;top:297px;width:33px;height:12px;overflow:hidden"><div class="t" style="left:0.00px;top:2.68px;font-size:7.2px;line-height:8.04px;color:#000;-webkit-text-stroke:0.25px #000">OD_DECA</div></div>
<div class="a" style="left:5px;top:313px;width:13px;height:12px;border:1px solid #1010c8;background:repeating-linear-gradient(45deg,#1010c8 0 1.2px,transparent 1.2px 3px),repeating-linear-gradient(-45deg,#1010c8 0 1.2px,#7070f0 1.2px 3px)"></div>
<div class="cell" style="left:19px;top:313px;width:16px;height:12px"></div>
<div class="t" style="left:21.00px;top:315.52px;font-size:7.6px;line-height:8.49px;color:#000;-webkit-text-stroke:0.25px #000">dg</div>
<div class="cell" style="left:35px;top:313px;width:36px;height:12px"></div>
<div class="a" style="left:37px;top:313px;width:33px;height:12px;overflow:hidden"><div class="t" style="left:0.00px;top:2.68px;font-size:7.2px;line-height:8.04px;color:#000;-webkit-text-stroke:0.25px #000">PO</div></div>
<div class="a" style="left:5px;top:329px;width:13px;height:12px;background:#a8b8b0;border:2px solid #30a070;border-top-color:#30a070;"></div>
<div class="cell" style="left:19px;top:329px;width:16px;height:12px"></div>
<div class="t" style="left:21.00px;top:331.52px;font-size:7.6px;line-height:8.49px;color:#000;-webkit-text-stroke:0.25px #000">dg</div>
<div class="cell" style="left:35px;top:329px;width:36px;height:12px"></div>
<div class="a" style="left:37px;top:329px;width:33px;height:12px;overflow:hidden"><div class="t" style="left:0.00px;top:2.68px;font-size:7.2px;line-height:8.04px;color:#000;-webkit-text-stroke:0.25px #000">VTH_N</div></div>
<div class="a" style="left:5px;top:345px;width:13px;height:12px;background:#b8b4a8;border:2px solid #b0a070;border-top-color:#b0a070;"></div>
<div class="cell" style="left:19px;top:345px;width:16px;height:12px"></div>
<div class="t" style="left:21.00px;top:347.52px;font-size:7.6px;line-height:8.49px;color:#000;-webkit-text-stroke:0.25px #000">dg</div>
<div class="cell" style="left:35px;top:345px;width:36px;height:12px"></div>
<div class="a" style="left:37px;top:345px;width:33px;height:12px;overflow:hidden"><div class="t" style="left:0.00px;top:2.68px;font-size:7.2px;line-height:8.04px;color:#000;-webkit-text-stroke:0.25px #000">VTH_P</div></div>
<div class="a" style="left:5px;top:360px;width:13px;height:12px;background:#b0b0b8;border:2px solid #2020c0;border-top-color:#2020c0;"></div>
<div class="cell" style="left:19px;top:360px;width:16px;height:12px"></div>
<div class="t" style="left:21.00px;top:362.52px;font-size:7.6px;line-height:8.49px;color:#000;-webkit-text-stroke:0.25px #000">dg</div>
<div class="cell" style="left:35px;top:360px;width:36px;height:12px"></div>
<div class="a" style="left:37px;top:360px;width:33px;height:12px;overflow:hidden"><div class="t" style="left:0.00px;top:2.68px;font-size:7.2px;line-height:8.04px;color:#000;-webkit-text-stroke:0.25px #000">VTL_N</div></div>
<div class="cell" style="left:5px;top:376px;width:13px;height:12px;background:#c0bcc4"></div>
<div class="cell" style="left:19px;top:376px;width:16px;height:12px"></div>
<div class="t" style="left:21.00px;top:378.52px;font-size:7.6px;line-height:8.49px;color:#000;-webkit-text-stroke:0.25px #000">dg</div>
<div class="cell" style="left:35px;top:376px;width:36px;height:12px"></div>
<div class="a" style="left:37px;top:376px;width:33px;height:12px;overflow:hidden"><div class="t" style="left:0.00px;top:2.68px;font-size:7.2px;line-height:8.04px;color:#000;-webkit-text-stroke:0.25px #000">VTL_P</div></div>
<div class="cell" style="left:5px;top:392px;width:13px;height:12px;background:#bababa"></div>
<div class="cell" style="left:19px;top:392px;width:16px;height:12px"></div>
<div class="t" style="left:21.00px;top:394.52px;font-size:7.6px;line-height:8.49px;color:#000;-webkit-text-stroke:0.25px #000">dg</div>
<div class="cell" style="left:35px;top:392px;width:36px;height:12px"></div>
<div class="a" style="left:37px;top:392px;width:33px;height:12px;overflow:hidden"><div class="t" style="left:0.00px;top:2.68px;font-size:7.2px;line-height:8.04px;color:#000;-webkit-text-stroke:0.25px #000">NT_N</div></div>
<div class="a" style="left:5px;top:408px;width:13px;height:12px;background:#b8b0b8;border:2px solid #d020a0;border-top-color:#d020a0;"></div>
<div class="cell" style="left:19px;top:408px;width:16px;height:12px"></div>
<div class="t" style="left:21.00px;top:410.52px;font-size:7.6px;line-height:8.49px;color:#000;-webkit-text-stroke:0.25px #000">dg</div>
<div class="cell" style="left:35px;top:408px;width:36px;height:12px"></div>
<div class="a" style="left:37px;top:408px;width:33px;height:12px;overflow:hidden"><div class="t" style="left:0.00px;top:2.68px;font-size:7.2px;line-height:8.04px;color:#000;-webkit-text-stroke:0.25px #000">PP</div></div>
<div class="cell" style="left:5px;top:423px;width:13px;height:12px;background:#bcbcbc"></div>
<div class="cell" style="left:19px;top:423px;width:16px;height:12px"></div>
<div class="t" style="left:21.00px;top:425.52px;font-size:7.6px;line-height:8.49px;color:#000;-webkit-text-stroke:0.25px #000">dg</div>
<div class="cell" style="left:35px;top:423px;width:36px;height:12px"></div>
<div class="a" style="left:37px;top:423px;width:33px;height:12px;overflow:hidden"><div class="t" style="left:0.00px;top:2.68px;font-size:7.2px;line-height:8.04px;color:#000;-webkit-text-stroke:0.25px #000">NP</div></div>
<div class="a" style="left:3px;top:122px;width:70px;height:16px;border:1.5px solid #d87080"></div>
<div class="a" style="left:4px;top:138px;width:68px;height:1px;background:#d8c040"></div>
<!-- left bottom entry -->
<div class="a sunk" style="left:3px;top:451px;width:82px;height:18px;background:#c6c6c6"></div>
<div class="fld" style="left:5px;top:454px;width:67px;height:13px"></div>
<div class="a" style="left:8px;top:457px;width:1px;height:8px;background:#444"></div>
<div class="a raise" style="left:73px;top:454px;width:10px;height:13px;background:#c0c0c0"></div>

<!-- tcl row -->
<div class="t" style="left:3.60px;top:471.73px;font-size:10.8px;line-height:12.06px;color:#111;">Tcl:</div>
<div class="fld" style="left:22px;top:471px;width:620px;height:15px"></div>
<div class="a sunk" style="left:644px;top:470px;width:70px;height:16px;background:#c4c4c4"></div>
<div class="a sunk" style="left:647px;top:472px;width:14px;height:12px;background:#b4b4b4"></div>
<div class="cell" style="left:661px;top:472px;width:14px;height:12px"></div>
<div class="lt" style="left:662px;top:474px">dg</div>
<div class="fld" style="left:677px;top:472px;width:36px;height:13px"></div>
<div class="t" style="left:683px;top:474px">ref</div>
<div class="a sunk" style="left:715px;top:470px;width:16px;height:16px;background:#c4c4c4"></div>

<!-- status -->
<div class="a sunk" style="left:3px;top:488px;width:731px;height:14px;background:#dedede"></div>
<div class="t" style="left:7.60px;top:490.85px;font-size:8.56px;line-height:9.56px;">PreSelect Info:Instance I__1634+Lib(tsmc_45) Cell(INR2D4BWP) View(layout) .</div>
<div class="a" style="left:737px;top:488px;width:10px;height:18px;background:#b4b4b4;border:1px solid #888"></div>

</body></html>
